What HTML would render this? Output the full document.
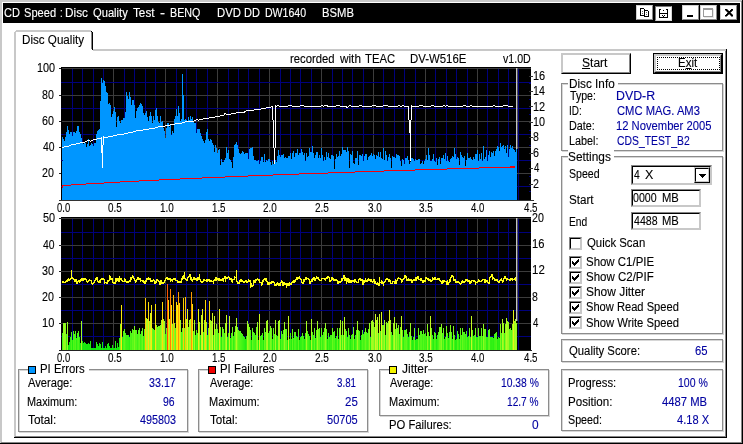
<!DOCTYPE html>
<html lang="en"><head><meta charset="utf-8"><title>CD Speed : Disc Quality Test</title>
<style>
html,body{margin:0;padding:0}
body{width:743px;height:444px;overflow:hidden;background:#fff;position:relative;font-family:"Liberation Sans",sans-serif;font-size:12px;line-height:14px;color:#000}
.a,.t{position:absolute}
.t{white-space:pre;transform-origin:0 0;line-height:14px;height:14px;-webkit-text-stroke:0.12px currentColor}
.t u{text-decoration:underline;text-underline-offset:1px}
.grp{position:absolute;border:1px solid #8c8c8c;box-sizing:border-box}
.grp2{position:absolute;border:1px solid #d6d6d6;box-sizing:border-box}
.mask{position:absolute;background:#fff}
.btn{position:absolute;box-sizing:border-box;background:#fff;border:1px solid;border-color:#c8c8c8 #000 #000 #c8c8c8}
.btn i{position:absolute;left:0;top:0;right:0;bottom:0;border:1px solid;border-color:#c8c8c8 #858585 #858585 #c8c8c8}
.cb{position:absolute;width:13px;height:13px;box-sizing:border-box;background:#fff;border:1px solid;border-color:#858585 #c8c8c8 #c8c8c8 #858585}
.cb i{position:absolute;left:0;top:0;right:0;bottom:0;border:1px solid;border-color:#000 #c8c8c8 #c8c8c8 #000}
.ed{position:absolute;box-sizing:border-box;background:#fff;border:1px solid;border-color:#858585 #c8c8c8 #c8c8c8 #858585}
.ed i{position:absolute;left:0;top:0;right:0;bottom:0;border:1px solid;border-color:#000 #c8c8c8 #c8c8c8 #000}
.sq{position:absolute;width:8px;height:8px;box-sizing:border-box;border:1px solid #000}
.tb{position:absolute;box-sizing:border-box;background:#fff;border:1px solid;border-color:#d0d0d0 #8a8a8a #8a8a8a #d0d0d0}
</style></head><body>
<div class="a" style="left:0px;top:0px;width:742px;height:2px;background:#c8c8c8;"></div>
<div class="a" style="left:0px;top:0px;width:2px;height:443px;background:#c8c8c8;"></div>
<div class="a" style="left:741px;top:1px;width:1px;height:442px;background:#868686;"></div>
<div class="a" style="left:1px;top:442px;width:741px;height:1px;background:#868686;"></div>
<div class="a" style="left:742px;top:0px;width:1px;height:444px;background:#000;"></div>
<div class="a" style="left:0px;top:443px;width:743px;height:1px;background:#000;"></div>
<div class="a" id="titlebar" style="left:3px;top:3px;width:737px;height:20px;background:#000"></div>
<div class="tb" style="left:636px;top:5px;width:17px;height:15px"><svg class="a" style="left:3px;top:2px" width="10" height="10" viewBox="0 0 10 10" shape-rendering="crispEdges"><path d="M0.5,0.5h3l1,1v6h-4z M4.5,2.5h3l1,1v5h-4z" fill="#fff" stroke="#000"/><rect x="2" y="3" width="1" height="1" fill="#666"/><rect x="2" y="5" width="1" height="1" fill="#666"/><rect x="6" y="4" width="1" height="1" fill="#666"/><rect x="6" y="6" width="1" height="1" fill="#666"/></svg></div>
<div class="a" style="left:655px;top:6px;width:17px;height:15px;background:#fff;box-sizing:border-box;border:1px solid;border-color:#7a7a7a #d6d6d6 #d6d6d6 #7a7a7a"><svg class="a" style="left:3px;top:2px" width="10" height="10" viewBox="0 0 10 10" shape-rendering="crispEdges"><path d="M0,0h1v9h-1z M8,0h1v9h-1z M0,4h9v1h-9z M0,8h9v1h-9z M0,0h2v1h-2z M7,0h2v1h-2z M4,1h1v1h-1z M3,6h1v1h-1z M5,6h1v1h-1z M4,7h1v1h-1z" fill="#000"/></svg></div>
<div class="tb" style="left:682px;top:5px;width:17px;height:15px"><div class="a" style="left:4px;top:9px;width:6px;height:2px;background:#000"></div></div>
<div class="tb" style="left:700px;top:5px;width:17px;height:15px"><div class="a" style="left:2px;top:2px;width:10px;height:9px;box-sizing:border-box;border:1px solid #9a9a9a;border-top-width:2px;box-shadow:1px 1px 0 #e8e8e8"></div></div>
<div class="tb" style="left:720px;top:5px;width:17px;height:15px"><svg class="a" style="left:4px;top:3px" width="8" height="8" viewBox="0 0 8 8" shape-rendering="crispEdges"><path d="M0,0h2v1h1v1h2v-1h1v-1h2v1h-1v1h-1v1h-1v1h1v1h1v1h1v1h-2v-1h-1v-1h-2v1h-1v1h-2v-1h1v-1h1v-1h1v-1h-1v-1h-1v-1h-1z" fill="#000" stroke="#000" stroke-width="0.5"/></svg></div>
<div class="a" style="left:14px;top:32px;width:2px;height:405px;background:#c8c8c8;"></div>
<div class="a" style="left:16px;top:30px;width:75px;height:2px;background:#c8c8c8;"></div>
<div class="a" style="left:15px;top:31px;width:1px;height:1px;background:#c8c8c8;"></div>
<div class="a" style="left:91px;top:31px;width:1px;height:1px;background:#000;"></div>
<div class="a" style="left:92px;top:32px;width:1px;height:18px;background:#000;"></div>
<div class="a" style="left:91px;top:32px;width:1px;height:17px;background:#858585;"></div>
<div class="a" style="left:93px;top:49px;width:633px;height:2px;background:#c8c8c8;"></div>
<div class="a" style="left:725px;top:51px;width:1px;height:386px;background:#858585;"></div>
<div class="a" style="left:726px;top:49px;width:1px;height:389px;background:#000;"></div>
<div class="a" style="left:15px;top:436px;width:711px;height:1px;background:#858585;"></div>
<div class="a" style="left:14px;top:437px;width:713px;height:1px;background:#000;"></div>
<div class="btn" style="left:561px;top:53px;width:70px;height:21px"><i></i></div>
<div class="a" style="left:653px;top:53px;width:70px;height:21px;background:#000"></div>
<div class="btn" style="left:654px;top:54px;width:68px;height:19px"><i></i></div>
<div class="a" style="left:657px;top:57px;width:63px;height:13px;box-sizing:border-box;border:1px dotted #000"></div>
<div class="grp2" style="left:562px;top:84px;width:162px;height:68px"></div>
<div class="grp" style="left:561px;top:83px;width:162px;height:68px"></div>
<div class="mask" style="left:568px;top:76px;width:50px;height:14px"></div>
<div class="grp2" style="left:562px;top:157px;width:162px;height:178px"></div>
<div class="grp" style="left:561px;top:156px;width:162px;height:178px"></div>
<div class="mask" style="left:568px;top:149px;width:46px;height:14px"></div>
<div class="grp2" style="left:562px;top:340px;width:162px;height:23px"></div>
<div class="grp" style="left:561px;top:339px;width:162px;height:23px"></div>
<div class="grp2" style="left:562px;top:370px;width:162px;height:62px"></div>
<div class="grp" style="left:561px;top:369px;width:162px;height:62px"></div>
<div class="grp2" style="left:19px;top:370px;width:170px;height:63px"></div>
<div class="grp" style="left:18px;top:369px;width:170px;height:63px"></div>
<div class="mask" style="left:36px;top:362px;width:53px;height:14px"></div>
<div class="grp2" style="left:199px;top:370px;width:170px;height:63px"></div>
<div class="grp" style="left:198px;top:369px;width:170px;height:63px"></div>
<div class="mask" style="left:216px;top:362px;width:63px;height:14px"></div>
<div class="grp2" style="left:380px;top:370px;width:170px;height:47px"></div>
<div class="grp" style="left:379px;top:369px;width:170px;height:47px"></div>
<div class="mask" style="left:397px;top:362px;width:31px;height:14px"></div>
<div class="sq" style="left:28px;top:366px;background:#0096ff"></div>
<div class="sq" style="left:208px;top:366px;background:#f00000"></div>
<div class="sq" style="left:389px;top:366px;background:#f4f400"></div>
<div class="ed" style="left:631px;top:165px;width:81px;height:20px"><i></i><div class="btn" style="left:62px;top:1px;width:16px;height:16px"><i></i><svg class="a" style="left:4px;top:6px" width="7" height="4" viewBox="0 0 7 4" shape-rendering="crispEdges"><path d="M0,0h7v1h-1v1h-1v1h-1v1h-1v-1h-1v-1h-1v-1h-1z" fill="#000"/></svg></div></div>
<div class="ed" style="left:631px;top:189px;width:70px;height:18px"><i></i></div>
<div class="ed" style="left:631px;top:212px;width:70px;height:18px"><i></i></div>
<div class="cb" style="left:569px;top:237px"><i></i></div>
<div class="cb" style="left:569px;top:256px"><i></i><svg class="a" style="left:2px;top:2px" width="7" height="7" viewBox="0 0 7 7" shape-rendering="crispEdges"><path d="M0,2h1v1h1v1h1v-1h1v-1h1v-1h1v-1h1v3h-1v1h-1v1h-1v1h-1v1h-1v-1h-1v-1h-1z" fill="#000"/></svg></div>
<div class="cb" style="left:569px;top:271px"><i></i><svg class="a" style="left:2px;top:2px" width="7" height="7" viewBox="0 0 7 7" shape-rendering="crispEdges"><path d="M0,2h1v1h1v1h1v-1h1v-1h1v-1h1v-1h1v3h-1v1h-1v1h-1v1h-1v1h-1v-1h-1v-1h-1z" fill="#000"/></svg></div>
<div class="cb" style="left:569px;top:286px"><i></i><svg class="a" style="left:2px;top:2px" width="7" height="7" viewBox="0 0 7 7" shape-rendering="crispEdges"><path d="M0,2h1v1h1v1h1v-1h1v-1h1v-1h1v-1h1v3h-1v1h-1v1h-1v1h-1v1h-1v-1h-1v-1h-1z" fill="#000"/></svg></div>
<div class="cb" style="left:569px;top:301px"><i></i><svg class="a" style="left:2px;top:2px" width="7" height="7" viewBox="0 0 7 7" shape-rendering="crispEdges"><path d="M0,2h1v1h1v1h1v-1h1v-1h1v-1h1v-1h1v3h-1v1h-1v1h-1v1h-1v1h-1v-1h-1v-1h-1z" fill="#000"/></svg></div>
<div class="cb" style="left:569px;top:316px"><i></i><svg class="a" style="left:2px;top:2px" width="7" height="7" viewBox="0 0 7 7" shape-rendering="crispEdges"><path d="M0,2h1v1h1v1h1v-1h1v-1h1v-1h1v-1h1v3h-1v1h-1v1h-1v1h-1v1h-1v-1h-1v-1h-1z" fill="#000"/></svg></div>
<svg class="charts" width="743" height="444" viewBox="0 0 743 444" style="position:absolute;left:0;top:0">
<g shape-rendering="crispEdges">
<rect x="61" y="67" width="470" height="134" fill="#000"/>
<rect x="72" y="69" width="1" height="132" fill="#00007c"/>
<rect x="82" y="69" width="1" height="132" fill="#00007c"/>
<rect x="93" y="69" width="1" height="132" fill="#00007c"/>
<rect x="103" y="69" width="1" height="132" fill="#00007c"/>
<rect x="113" y="69" width="1" height="132" fill="#3c3c3c"/>
<rect x="124" y="69" width="1" height="132" fill="#00007c"/>
<rect x="134" y="69" width="1" height="132" fill="#00007c"/>
<rect x="145" y="69" width="1" height="132" fill="#00007c"/>
<rect x="155" y="69" width="1" height="132" fill="#00007c"/>
<rect x="165" y="69" width="1" height="132" fill="#3c3c3c"/>
<rect x="176" y="69" width="1" height="132" fill="#00007c"/>
<rect x="186" y="69" width="1" height="132" fill="#00007c"/>
<rect x="196" y="69" width="1" height="132" fill="#00007c"/>
<rect x="207" y="69" width="1" height="132" fill="#00007c"/>
<rect x="217" y="69" width="1" height="132" fill="#3c3c3c"/>
<rect x="228" y="69" width="1" height="132" fill="#00007c"/>
<rect x="238" y="69" width="1" height="132" fill="#00007c"/>
<rect x="248" y="69" width="1" height="132" fill="#00007c"/>
<rect x="259" y="69" width="1" height="132" fill="#00007c"/>
<rect x="269" y="69" width="1" height="132" fill="#3c3c3c"/>
<rect x="280" y="69" width="1" height="132" fill="#00007c"/>
<rect x="290" y="69" width="1" height="132" fill="#00007c"/>
<rect x="300" y="69" width="1" height="132" fill="#00007c"/>
<rect x="311" y="69" width="1" height="132" fill="#00007c"/>
<rect x="321" y="69" width="1" height="132" fill="#3c3c3c"/>
<rect x="332" y="69" width="1" height="132" fill="#00007c"/>
<rect x="342" y="69" width="1" height="132" fill="#00007c"/>
<rect x="352" y="69" width="1" height="132" fill="#00007c"/>
<rect x="363" y="69" width="1" height="132" fill="#00007c"/>
<rect x="373" y="69" width="1" height="132" fill="#3c3c3c"/>
<rect x="383" y="69" width="1" height="132" fill="#00007c"/>
<rect x="394" y="69" width="1" height="132" fill="#00007c"/>
<rect x="404" y="69" width="1" height="132" fill="#00007c"/>
<rect x="415" y="69" width="1" height="132" fill="#00007c"/>
<rect x="425" y="69" width="1" height="132" fill="#3c3c3c"/>
<rect x="435" y="69" width="1" height="132" fill="#00007c"/>
<rect x="446" y="69" width="1" height="132" fill="#00007c"/>
<rect x="456" y="69" width="1" height="132" fill="#00007c"/>
<rect x="467" y="69" width="1" height="132" fill="#00007c"/>
<rect x="477" y="69" width="1" height="132" fill="#3c3c3c"/>
<rect x="487" y="69" width="1" height="132" fill="#00007c"/>
<rect x="498" y="69" width="1" height="132" fill="#00007c"/>
<rect x="508" y="69" width="1" height="132" fill="#00007c"/>
<rect x="518" y="69" width="1" height="132" fill="#00007c"/>
<rect x="61" y="82" width="470" height="1" fill="#00007c"/>
<rect x="61" y="108" width="470" height="1" fill="#00007c"/>
<rect x="61" y="134" width="470" height="1" fill="#00007c"/>
<rect x="61" y="160" width="470" height="1" fill="#00007c"/>
<rect x="61" y="186" width="470" height="1" fill="#00007c"/>
<rect x="61" y="68" width="470" height="1" fill="#3c3c3c"/>
<rect x="61" y="95" width="470" height="1" fill="#3c3c3c"/>
<rect x="61" y="121" width="470" height="1" fill="#3c3c3c"/>
<rect x="61" y="147" width="470" height="1" fill="#3c3c3c"/>
<rect x="61" y="173" width="470" height="1" fill="#3c3c3c"/>
</g>
<path d="M62,200 L62,137 L63,137 L63,139 L64,139 L64,141 L65,141 L65,137 L66,137 L66,132 L67,132 L67,126 L68,126 L68,130 L69,130 L69,134 L70,134 L70,132 L71,132 L71,132 L72,132 L72,136 L73,136 L73,132 L74,132 L74,132 L75,132 L75,133 L76,133 L76,131 L77,131 L77,126 L78,126 L78,126 L79,126 L79,132 L80,132 L80,134 L81,134 L81,138 L82,138 L82,142 L83,142 L83,144 L84,144 L84,142 L85,142 L85,143 L86,143 L86,147 L87,147 L87,144 L88,144 L88,139 L89,139 L89,146 L90,146 L90,145 L91,145 L91,143 L92,143 L92,144 L93,144 L93,146 L94,146 L94,143 L95,143 L95,143 L96,143 L96,134 L97,134 L97,131 L98,131 L98,130 L99,130 L99,129 L100,129 L100,101 L101,101 L101,78 L102,78 L102,83 L103,83 L103,80 L104,80 L104,81 L105,81 L105,86 L106,86 L106,92 L107,92 L107,93 L108,93 L108,104 L109,104 L109,103 L110,103 L110,105 L111,105 L111,117 L112,117 L112,114 L113,114 L113,111 L114,111 L114,107 L115,107 L115,112 L116,112 L116,127 L117,127 L117,117 L118,117 L118,116 L119,116 L119,121 L120,121 L120,123 L121,123 L121,120 L122,120 L122,120 L123,120 L123,118 L124,118 L124,118 L125,118 L125,112 L126,112 L126,92 L127,92 L127,96 L128,96 L128,99 L129,99 L129,92 L130,92 L130,97 L131,97 L131,105 L132,105 L132,100 L133,100 L133,100 L134,100 L134,105 L135,105 L135,118 L136,118 L136,111 L137,111 L137,108 L138,108 L138,107 L139,107 L139,105 L140,105 L140,103 L141,103 L141,104 L142,104 L142,106 L143,106 L143,113 L144,113 L144,115 L145,115 L145,113 L146,113 L146,111 L147,111 L147,117 L148,117 L148,121 L149,121 L149,116 L150,116 L150,112 L151,112 L151,116 L152,116 L152,123 L153,123 L153,116 L154,116 L154,120 L155,120 L155,110 L156,110 L156,108 L157,108 L157,116 L158,116 L158,122 L159,122 L159,123 L160,123 L160,116 L161,116 L161,122 L162,122 L162,121 L163,121 L163,128 L164,128 L164,131 L165,131 L165,138 L166,138 L166,128 L167,128 L167,123 L168,123 L168,123 L169,123 L169,127 L170,127 L170,125 L171,125 L171,135 L172,135 L172,131 L173,131 L173,133 L174,133 L174,119 L175,119 L175,116 L176,116 L176,109 L177,109 L177,116 L178,116 L178,106 L179,106 L179,113 L180,113 L180,121 L181,121 L181,119 L182,119 L182,74 L183,74 L183,95 L184,95 L184,120 L185,120 L185,119 L186,119 L186,120 L187,120 L187,122 L188,122 L188,117 L189,117 L189,120 L190,120 L190,116 L191,116 L191,119 L192,119 L192,117 L193,117 L193,121 L194,121 L194,123 L195,123 L195,123 L196,123 L196,133 L197,133 L197,129 L198,129 L198,129 L199,129 L199,129 L200,129 L200,133 L201,133 L201,136 L202,136 L202,139 L203,139 L203,141 L204,141 L204,143 L205,143 L205,140 L206,140 L206,132 L207,132 L207,129 L208,129 L208,139 L209,139 L209,141 L210,141 L210,139 L211,139 L211,140 L212,140 L212,143 L213,143 L213,145 L214,145 L214,152 L215,152 L215,145 L216,145 L216,148 L217,148 L217,153 L218,153 L218,150 L219,150 L219,149 L220,149 L220,165 L221,165 L221,159 L222,159 L222,162 L223,162 L223,162 L224,162 L224,160 L225,160 L225,158 L226,158 L226,147 L227,147 L227,153 L228,153 L228,150 L229,150 L229,159 L230,159 L230,160 L231,160 L231,162 L232,162 L232,168 L233,168 L233,157 L234,157 L234,145 L235,145 L235,144 L236,144 L236,142 L237,142 L237,145 L238,145 L238,149 L239,149 L239,153 L240,153 L240,154 L241,154 L241,153 L242,153 L242,151 L243,151 L243,152 L244,152 L244,154 L245,154 L245,153 L246,153 L246,153 L247,153 L247,153 L248,153 L248,159 L249,159 L249,149 L250,149 L250,148 L251,148 L251,148 L252,148 L252,147 L253,147 L253,156 L254,156 L254,160 L255,160 L255,160 L256,160 L256,161 L257,161 L257,161 L258,161 L258,160 L259,160 L259,164 L260,164 L260,161 L261,161 L261,157 L262,157 L262,157 L263,157 L263,162 L264,162 L264,154 L265,154 L265,162 L266,162 L266,160 L267,160 L267,161 L268,161 L268,159 L269,159 L269,159 L270,159 L270,162 L271,162 L271,165 L272,165 L272,161 L273,161 L273,164 L274,164 L274,162 L275,162 L275,160 L276,160 L276,162 L277,162 L277,156 L278,156 L278,150 L279,150 L279,155 L280,155 L280,157 L281,157 L281,155 L282,155 L282,155 L283,155 L283,154 L284,154 L284,158 L285,158 L285,157 L286,157 L286,158 L287,158 L287,158 L288,158 L288,156 L289,156 L289,156 L290,156 L290,153 L291,153 L291,159 L292,159 L292,153 L293,153 L293,151 L294,151 L294,157 L295,157 L295,153 L296,153 L296,153 L297,153 L297,149 L298,149 L298,155 L299,155 L299,153 L300,153 L300,153 L301,153 L301,149 L302,149 L302,152 L303,152 L303,155 L304,155 L304,153 L305,153 L305,161 L306,161 L306,153 L307,153 L307,157 L308,157 L308,156 L309,156 L309,148 L310,148 L310,152 L311,152 L311,152 L312,152 L312,146 L313,146 L313,153 L314,153 L314,158 L315,158 L315,155 L316,155 L316,152 L317,152 L317,152 L318,152 L318,158 L319,158 L319,155 L320,155 L320,158 L321,158 L321,148 L322,148 L322,155 L323,155 L323,161 L324,161 L324,157 L325,157 L325,160 L326,160 L326,152 L327,152 L327,157 L328,157 L328,153 L329,153 L329,158 L330,158 L330,159 L331,159 L331,155 L332,155 L332,155 L333,155 L333,156 L334,156 L334,169 L335,169 L335,159 L336,159 L336,154 L337,154 L337,157 L338,157 L338,156 L339,156 L339,151 L340,151 L340,156 L341,156 L341,154 L342,154 L342,147 L343,147 L343,150 L344,150 L344,150 L345,150 L345,150 L346,150 L346,152 L347,152 L347,147 L348,147 L348,151 L349,151 L349,168 L350,168 L350,154 L351,154 L351,155 L352,155 L352,151 L353,151 L353,163 L354,163 L354,164 L355,164 L355,158 L356,158 L356,158 L357,158 L357,151 L358,151 L358,165 L359,165 L359,155 L360,155 L360,155 L361,155 L361,156 L362,156 L362,154 L363,154 L363,161 L364,161 L364,156 L365,156 L365,154 L366,154 L366,154 L367,154 L367,160 L368,160 L368,157 L369,157 L369,156 L370,156 L370,155 L371,155 L371,153 L372,153 L372,156 L373,156 L373,154 L374,154 L374,155 L375,155 L375,159 L376,159 L376,155 L377,155 L377,156 L378,156 L378,152 L379,152 L379,157 L380,157 L380,152 L381,152 L381,158 L382,158 L382,159 L383,159 L383,148 L384,148 L384,160 L385,160 L385,151 L386,151 L386,155 L387,155 L387,161 L388,161 L388,157 L389,157 L389,154 L390,154 L390,158 L391,158 L391,168 L392,168 L392,156 L393,156 L393,157 L394,157 L394,157 L395,157 L395,158 L396,158 L396,154 L397,154 L397,155 L398,155 L398,155 L399,155 L399,156 L400,156 L400,161 L401,161 L401,166 L402,166 L402,159 L403,159 L403,160 L404,160 L404,164 L405,164 L405,158 L406,158 L406,158 L407,158 L407,156 L408,156 L408,160 L409,160 L409,164 L410,164 L410,162 L411,162 L411,158 L412,158 L412,158 L413,158 L413,159 L414,159 L414,161 L415,161 L415,159 L416,159 L416,160 L417,160 L417,160 L418,160 L418,159 L419,159 L419,159 L420,159 L420,164 L421,164 L421,163 L422,163 L422,161 L423,161 L423,164 L424,164 L424,161 L425,161 L425,159 L426,159 L426,155 L427,155 L427,160 L428,160 L428,148 L429,148 L429,155 L430,155 L430,161 L431,161 L431,161 L432,161 L432,159 L433,159 L433,154 L434,154 L434,161 L435,161 L435,162 L436,162 L436,158 L437,158 L437,165 L438,165 L438,159 L439,159 L439,157 L440,157 L440,164 L441,164 L441,158 L442,158 L442,158 L443,158 L443,155 L444,155 L444,159 L445,159 L445,153 L446,153 L446,161 L447,161 L447,156 L448,156 L448,161 L449,161 L449,162 L450,162 L450,159 L451,159 L451,158 L452,158 L452,156 L453,156 L453,157 L454,157 L454,148 L455,148 L455,154 L456,154 L456,159 L457,159 L457,157 L458,157 L458,158 L459,158 L459,165 L460,165 L460,152 L461,152 L461,155 L462,155 L462,157 L463,157 L463,158 L464,158 L464,156 L465,156 L465,166 L466,166 L466,160 L467,160 L467,153 L468,153 L468,158 L469,158 L469,158 L470,158 L470,157 L471,157 L471,159 L472,159 L472,160 L473,160 L473,157 L474,157 L474,159 L475,159 L475,154 L476,154 L476,154 L477,154 L477,150 L478,150 L478,161 L479,161 L479,154 L480,154 L480,159 L481,159 L481,153 L482,153 L482,161 L483,161 L483,146 L484,146 L484,159 L485,159 L485,157 L486,157 L486,150 L487,150 L487,161 L488,161 L488,155 L489,155 L489,151 L490,151 L490,157 L491,157 L491,152 L492,152 L492,153 L493,153 L493,151 L494,151 L494,156 L495,156 L495,151 L496,151 L496,149 L497,149 L497,146 L498,146 L498,147 L499,147 L499,151 L500,151 L500,143 L501,143 L501,147 L502,147 L502,146 L503,146 L503,145 L504,145 L504,149 L505,149 L505,146 L506,146 L506,153 L507,153 L507,145 L508,145 L508,157 L509,157 L509,149 L510,149 L510,145 L511,145 L511,148 L512,148 L512,146 L513,146 L513,149 L514,149 L514,150 L515,150 L515,152 L516,152 L516,147 L517,147 L517,200 Z" fill="#0096ff" shape-rendering="crispEdges"/>
<g shape-rendering="crispEdges" fill="#00007c">
<rect x="61" y="67" width="1" height="134" fill="#000"/>
<rect x="61" y="186" width="2" height="1"/>
<rect x="61" y="160" width="2" height="1"/>
<rect x="61" y="134" width="2" height="1"/>
<rect x="61" y="108" width="2" height="1"/>
<rect x="61" y="82" width="2" height="1"/>
</g>
<g fill="#f4000c" shape-rendering="crispEdges"><rect x="62" y="185" width="9" height="1"/><rect x="71" y="184" width="15" height="1"/><rect x="86" y="183" width="18" height="1"/><rect x="104" y="182" width="16" height="1"/><rect x="120" y="181" width="19" height="1"/><rect x="139" y="180" width="20" height="1"/><rect x="159" y="179" width="21" height="1"/><rect x="180" y="178" width="22" height="1"/><rect x="202" y="177" width="23" height="1"/><rect x="225" y="176" width="23" height="1"/><rect x="248" y="175" width="25" height="1"/><rect x="273" y="174" width="26" height="1"/><rect x="299" y="173" width="29" height="1"/><rect x="328" y="172" width="27" height="1"/><rect x="355" y="171" width="29" height="1"/><rect x="384" y="170" width="31" height="1"/><rect x="415" y="169" width="32" height="1"/><rect x="447" y="168" width="32" height="1"/><rect x="479" y="167" width="36" height="1"/><rect x="62" y="186" width="1" height="2"/><rect x="510" y="166" width="5" height="1"/></g>
<g fill="#fff" shape-rendering="crispEdges"><rect x="62" y="147" width="1" height="1"/><rect x="63" y="147" width="1" height="1"/><rect x="64" y="146" width="1" height="1"/><rect x="65" y="146" width="1" height="1"/><rect x="66" y="146" width="1" height="1"/><rect x="67" y="146" width="1" height="1"/><rect x="68" y="146" width="1" height="1"/><rect x="69" y="145" width="1" height="1"/><rect x="70" y="145" width="1" height="1"/><rect x="71" y="144" width="1" height="1"/><rect x="72" y="144" width="1" height="1"/><rect x="73" y="144" width="1" height="1"/><rect x="74" y="144" width="1" height="1"/><rect x="75" y="144" width="1" height="1"/><rect x="76" y="143" width="1" height="1"/><rect x="77" y="143" width="1" height="1"/><rect x="78" y="143" width="1" height="1"/><rect x="79" y="143" width="1" height="1"/><rect x="80" y="142" width="1" height="1"/><rect x="81" y="142" width="1" height="1"/><rect x="82" y="142" width="1" height="1"/><rect x="83" y="142" width="1" height="1"/><rect x="84" y="142" width="1" height="1"/><rect x="85" y="141" width="1" height="1"/><rect x="86" y="141" width="1" height="1"/><rect x="87" y="140" width="1" height="1"/><rect x="88" y="140" width="1" height="1"/><rect x="89" y="140" width="1" height="1"/><rect x="90" y="141" width="1" height="1"/><rect x="91" y="140" width="1" height="1"/><rect x="92" y="140" width="1" height="1"/><rect x="93" y="139" width="1" height="1"/><rect x="94" y="139" width="1" height="1"/><rect x="95" y="139" width="1" height="1"/><rect x="96" y="139" width="1" height="1"/><rect x="97" y="138" width="1" height="1"/><rect x="98" y="138" width="1" height="1"/><rect x="99" y="138" width="1" height="1"/><rect x="100" y="138" width="1" height="1"/><rect x="101" y="138" width="1" height="1"/><rect x="103" y="138" width="1" height="1"/><rect x="104" y="137" width="1" height="1"/><rect x="105" y="137" width="1" height="1"/><rect x="106" y="137" width="1" height="1"/><rect x="107" y="137" width="1" height="1"/><rect x="108" y="136" width="1" height="1"/><rect x="109" y="136" width="1" height="1"/><rect x="110" y="136" width="1" height="1"/><rect x="111" y="136" width="1" height="1"/><rect x="112" y="136" width="1" height="1"/><rect x="113" y="135" width="1" height="1"/><rect x="114" y="135" width="1" height="1"/><rect x="115" y="135" width="1" height="1"/><rect x="116" y="135" width="1" height="1"/><rect x="117" y="134" width="1" height="1"/><rect x="118" y="134" width="1" height="1"/><rect x="119" y="134" width="1" height="1"/><rect x="120" y="134" width="1" height="1"/><rect x="121" y="134" width="1" height="1"/><rect x="122" y="134" width="1" height="1"/><rect x="123" y="134" width="1" height="1"/><rect x="124" y="133" width="1" height="1"/><rect x="125" y="133" width="1" height="1"/><rect x="126" y="133" width="1" height="1"/><rect x="127" y="133" width="1" height="1"/><rect x="128" y="132" width="1" height="1"/><rect x="129" y="132" width="1" height="1"/><rect x="130" y="132" width="1" height="1"/><rect x="131" y="132" width="1" height="1"/><rect x="132" y="132" width="1" height="1"/><rect x="133" y="131" width="1" height="1"/><rect x="134" y="131" width="1" height="1"/><rect x="135" y="131" width="1" height="1"/><rect x="136" y="130" width="1" height="1"/><rect x="137" y="130" width="1" height="1"/><rect x="138" y="130" width="1" height="1"/><rect x="139" y="130" width="1" height="1"/><rect x="140" y="130" width="1" height="1"/><rect x="141" y="130" width="1" height="1"/><rect x="142" y="130" width="1" height="1"/><rect x="143" y="129" width="1" height="1"/><rect x="144" y="129" width="1" height="1"/><rect x="145" y="129" width="1" height="1"/><rect x="146" y="129" width="1" height="1"/><rect x="147" y="129" width="1" height="1"/><rect x="148" y="129" width="1" height="1"/><rect x="149" y="128" width="1" height="1"/><rect x="150" y="128" width="1" height="1"/><rect x="151" y="128" width="1" height="1"/><rect x="152" y="128" width="1" height="1"/><rect x="153" y="128" width="1" height="1"/><rect x="154" y="128" width="1" height="1"/><rect x="155" y="127" width="1" height="1"/><rect x="156" y="127" width="1" height="1"/><rect x="157" y="127" width="1" height="1"/><rect x="158" y="126" width="1" height="1"/><rect x="159" y="126" width="1" height="1"/><rect x="160" y="126" width="1" height="1"/><rect x="161" y="126" width="1" height="1"/><rect x="162" y="126" width="1" height="1"/><rect x="163" y="126" width="1" height="1"/><rect x="164" y="126" width="1" height="1"/><rect x="165" y="125" width="1" height="1"/><rect x="166" y="125" width="1" height="1"/><rect x="167" y="125" width="1" height="1"/><rect x="168" y="125" width="1" height="1"/><rect x="169" y="125" width="1" height="1"/><rect x="170" y="124" width="1" height="1"/><rect x="171" y="124" width="1" height="1"/><rect x="172" y="124" width="1" height="1"/><rect x="173" y="124" width="1" height="1"/><rect x="174" y="124" width="1" height="1"/><rect x="175" y="123" width="1" height="1"/><rect x="176" y="123" width="1" height="1"/><rect x="177" y="123" width="1" height="1"/><rect x="178" y="123" width="1" height="1"/><rect x="179" y="123" width="1" height="1"/><rect x="180" y="123" width="1" height="1"/><rect x="181" y="123" width="1" height="1"/><rect x="182" y="122" width="1" height="1"/><rect x="183" y="122" width="1" height="1"/><rect x="184" y="122" width="1" height="1"/><rect x="185" y="121" width="1" height="1"/><rect x="186" y="121" width="1" height="1"/><rect x="187" y="121" width="1" height="1"/><rect x="188" y="121" width="1" height="1"/><rect x="189" y="121" width="1" height="1"/><rect x="190" y="121" width="1" height="1"/><rect x="191" y="121" width="1" height="1"/><rect x="192" y="121" width="1" height="1"/><rect x="193" y="121" width="1" height="1"/><rect x="194" y="120" width="1" height="1"/><rect x="195" y="120" width="1" height="1"/><rect x="196" y="119" width="1" height="1"/><rect x="197" y="119" width="1" height="1"/><rect x="198" y="120" width="1" height="1"/><rect x="199" y="119" width="1" height="1"/><rect x="200" y="119" width="1" height="1"/><rect x="201" y="119" width="1" height="1"/><rect x="202" y="119" width="1" height="1"/><rect x="203" y="118" width="1" height="1"/><rect x="204" y="118" width="1" height="1"/><rect x="205" y="118" width="1" height="1"/><rect x="206" y="118" width="1" height="1"/><rect x="207" y="118" width="1" height="1"/><rect x="208" y="118" width="1" height="1"/><rect x="209" y="117" width="1" height="1"/><rect x="210" y="117" width="1" height="1"/><rect x="211" y="117" width="1" height="1"/><rect x="212" y="117" width="1" height="1"/><rect x="213" y="117" width="1" height="1"/><rect x="214" y="117" width="1" height="1"/><rect x="215" y="116" width="1" height="1"/><rect x="216" y="116" width="1" height="1"/><rect x="217" y="116" width="1" height="1"/><rect x="218" y="116" width="1" height="1"/><rect x="219" y="116" width="1" height="1"/><rect x="220" y="115" width="1" height="1"/><rect x="221" y="115" width="1" height="1"/><rect x="222" y="115" width="1" height="1"/><rect x="223" y="115" width="1" height="1"/><rect x="224" y="113" width="1" height="2"/><rect x="225" y="113" width="1" height="1"/><rect x="226" y="114" width="1" height="1"/><rect x="227" y="114" width="1" height="1"/><rect x="228" y="114" width="1" height="1"/><rect x="229" y="114" width="1" height="1"/><rect x="230" y="114" width="1" height="1"/><rect x="231" y="113" width="1" height="1"/><rect x="232" y="113" width="1" height="1"/><rect x="233" y="113" width="1" height="1"/><rect x="234" y="113" width="1" height="1"/><rect x="235" y="113" width="1" height="1"/><rect x="236" y="112" width="1" height="1"/><rect x="237" y="112" width="1" height="1"/><rect x="238" y="112" width="1" height="1"/><rect x="239" y="112" width="1" height="1"/><rect x="240" y="112" width="1" height="1"/><rect x="241" y="112" width="1" height="1"/><rect x="242" y="112" width="1" height="1"/><rect x="243" y="112" width="1" height="1"/><rect x="244" y="111" width="1" height="2"/><rect x="245" y="111" width="1" height="1"/><rect x="246" y="110" width="1" height="1"/><rect x="247" y="110" width="1" height="1"/><rect x="248" y="110" width="1" height="1"/><rect x="249" y="110" width="1" height="1"/><rect x="250" y="110" width="1" height="1"/><rect x="251" y="110" width="1" height="1"/><rect x="252" y="110" width="1" height="1"/><rect x="253" y="110" width="1" height="1"/><rect x="254" y="109" width="1" height="1"/><rect x="255" y="109" width="1" height="1"/><rect x="256" y="109" width="1" height="1"/><rect x="257" y="109" width="1" height="1"/><rect x="258" y="109" width="1" height="1"/><rect x="259" y="109" width="1" height="1"/><rect x="260" y="109" width="1" height="1"/><rect x="261" y="108" width="1" height="1"/><rect x="262" y="108" width="1" height="1"/><rect x="263" y="108" width="1" height="1"/><rect x="264" y="108" width="1" height="1"/><rect x="265" y="108" width="1" height="1"/><rect x="266" y="107" width="1" height="1"/><rect x="267" y="107" width="1" height="1"/><rect x="268" y="107" width="1" height="1"/><rect x="269" y="107" width="1" height="1"/><rect x="270" y="107" width="1" height="1"/><rect x="271" y="106" width="1" height="1"/><rect x="272" y="106" width="1" height="1"/><rect x="275" y="106" width="1" height="1"/><rect x="276" y="106" width="1" height="1"/><rect x="277" y="105" width="1" height="1"/><rect x="278" y="105" width="1" height="1"/><rect x="279" y="106" width="1" height="1"/><rect x="280" y="106" width="1" height="1"/><rect x="281" y="106" width="1" height="1"/><rect x="282" y="106" width="1" height="1"/><rect x="283" y="106" width="1" height="1"/><rect x="284" y="106" width="1" height="1"/><rect x="285" y="106" width="1" height="1"/><rect x="286" y="106" width="1" height="1"/><rect x="287" y="106" width="1" height="1"/><rect x="288" y="105" width="1" height="1"/><rect x="289" y="105" width="1" height="1"/><rect x="290" y="105" width="1" height="1"/><rect x="291" y="105" width="1" height="1"/><rect x="292" y="106" width="1" height="1"/><rect x="293" y="106" width="1" height="1"/><rect x="294" y="106" width="1" height="1"/><rect x="295" y="106" width="1" height="1"/><rect x="296" y="106" width="1" height="1"/><rect x="297" y="106" width="1" height="1"/><rect x="298" y="106" width="1" height="1"/><rect x="299" y="106" width="1" height="1"/><rect x="300" y="105" width="1" height="1"/><rect x="301" y="105" width="1" height="1"/><rect x="302" y="105" width="1" height="1"/><rect x="303" y="105" width="1" height="1"/><rect x="304" y="106" width="1" height="1"/><rect x="305" y="106" width="1" height="1"/><rect x="306" y="106" width="1" height="1"/><rect x="307" y="106" width="1" height="1"/><rect x="308" y="106" width="1" height="1"/><rect x="309" y="106" width="1" height="1"/><rect x="310" y="106" width="1" height="1"/><rect x="311" y="106" width="1" height="1"/><rect x="312" y="106" width="1" height="1"/><rect x="313" y="106" width="1" height="1"/><rect x="314" y="106" width="1" height="1"/><rect x="315" y="106" width="1" height="1"/><rect x="316" y="106" width="1" height="1"/><rect x="317" y="106" width="1" height="1"/><rect x="318" y="106" width="1" height="1"/><rect x="319" y="106" width="1" height="1"/><rect x="320" y="106" width="1" height="1"/><rect x="321" y="105" width="1" height="1"/><rect x="322" y="105" width="1" height="1"/><rect x="323" y="106" width="1" height="1"/><rect x="324" y="105" width="1" height="1"/><rect x="325" y="105" width="1" height="1"/><rect x="326" y="105" width="1" height="1"/><rect x="327" y="105" width="1" height="2"/><rect x="328" y="106" width="1" height="1"/><rect x="329" y="106" width="1" height="1"/><rect x="330" y="106" width="1" height="1"/><rect x="331" y="106" width="1" height="1"/><rect x="332" y="106" width="1" height="1"/><rect x="333" y="106" width="1" height="1"/><rect x="334" y="106" width="1" height="1"/><rect x="335" y="106" width="1" height="1"/><rect x="336" y="105" width="1" height="1"/><rect x="337" y="105" width="1" height="1"/><rect x="338" y="105" width="1" height="1"/><rect x="339" y="105" width="1" height="1"/><rect x="340" y="106" width="1" height="1"/><rect x="341" y="106" width="1" height="1"/><rect x="342" y="106" width="1" height="1"/><rect x="343" y="106" width="1" height="1"/><rect x="344" y="106" width="1" height="1"/><rect x="345" y="106" width="1" height="1"/><rect x="346" y="106" width="1" height="2"/><rect x="347" y="107" width="1" height="1"/><rect x="348" y="106" width="1" height="1"/><rect x="349" y="105" width="1" height="1"/><rect x="350" y="105" width="1" height="1"/><rect x="351" y="106" width="1" height="1"/><rect x="352" y="106" width="1" height="1"/><rect x="353" y="106" width="1" height="1"/><rect x="354" y="106" width="1" height="1"/><rect x="355" y="106" width="1" height="1"/><rect x="356" y="106" width="1" height="1"/><rect x="357" y="106" width="1" height="1"/><rect x="358" y="106" width="1" height="1"/><rect x="359" y="105" width="1" height="1"/><rect x="360" y="105" width="1" height="1"/><rect x="361" y="105" width="1" height="1"/><rect x="362" y="106" width="1" height="1"/><rect x="363" y="106" width="1" height="1"/><rect x="364" y="106" width="1" height="1"/><rect x="365" y="106" width="1" height="1"/><rect x="366" y="106" width="1" height="1"/><rect x="367" y="106" width="1" height="1"/><rect x="368" y="106" width="1" height="1"/><rect x="369" y="106" width="1" height="1"/><rect x="370" y="106" width="1" height="1"/><rect x="371" y="106" width="1" height="1"/><rect x="372" y="105" width="1" height="1"/><rect x="373" y="105" width="1" height="1"/><rect x="374" y="105" width="1" height="1"/><rect x="375" y="105" width="1" height="1"/><rect x="376" y="106" width="1" height="1"/><rect x="377" y="106" width="1" height="1"/><rect x="378" y="106" width="1" height="1"/><rect x="379" y="106" width="1" height="1"/><rect x="380" y="106" width="1" height="1"/><rect x="381" y="106" width="1" height="1"/><rect x="382" y="106" width="1" height="1"/><rect x="383" y="105" width="1" height="1"/><rect x="384" y="105" width="1" height="1"/><rect x="385" y="105" width="1" height="1"/><rect x="386" y="105" width="1" height="1"/><rect x="387" y="105" width="1" height="1"/><rect x="388" y="106" width="1" height="1"/><rect x="389" y="106" width="1" height="1"/><rect x="390" y="106" width="1" height="1"/><rect x="391" y="106" width="1" height="1"/><rect x="392" y="106" width="1" height="1"/><rect x="393" y="106" width="1" height="1"/><rect x="394" y="106" width="1" height="1"/><rect x="395" y="106" width="1" height="1"/><rect x="396" y="106" width="1" height="1"/><rect x="397" y="106" width="1" height="1"/><rect x="398" y="105" width="1" height="1"/><rect x="399" y="105" width="1" height="1"/><rect x="400" y="106" width="1" height="1"/><rect x="401" y="106" width="1" height="1"/><rect x="402" y="105" width="1" height="1"/><rect x="403" y="105" width="1" height="1"/><rect x="404" y="106" width="1" height="1"/><rect x="405" y="106" width="1" height="1"/><rect x="406" y="106" width="1" height="1"/><rect x="407" y="106" width="1" height="1"/><rect x="408" y="106" width="1" height="1"/><rect x="411" y="105" width="1" height="1"/><rect x="412" y="106" width="1" height="1"/><rect x="413" y="106" width="1" height="1"/><rect x="414" y="106" width="1" height="1"/><rect x="415" y="106" width="1" height="1"/><rect x="416" y="106" width="1" height="1"/><rect x="417" y="106" width="1" height="1"/><rect x="418" y="106" width="1" height="1"/><rect x="419" y="105" width="1" height="1"/><rect x="420" y="105" width="1" height="1"/><rect x="421" y="105" width="1" height="1"/><rect x="422" y="105" width="1" height="1"/><rect x="423" y="106" width="1" height="1"/><rect x="424" y="106" width="1" height="1"/><rect x="425" y="106" width="1" height="1"/><rect x="426" y="106" width="1" height="1"/><rect x="427" y="106" width="1" height="1"/><rect x="428" y="106" width="1" height="1"/><rect x="429" y="106" width="1" height="1"/><rect x="430" y="106" width="1" height="1"/><rect x="431" y="105" width="1" height="1"/><rect x="432" y="105" width="1" height="1"/><rect x="433" y="105" width="1" height="1"/><rect x="434" y="106" width="1" height="1"/><rect x="435" y="106" width="1" height="1"/><rect x="436" y="106" width="1" height="1"/><rect x="437" y="106" width="1" height="1"/><rect x="438" y="106" width="1" height="1"/><rect x="439" y="106" width="1" height="1"/><rect x="440" y="106" width="1" height="1"/><rect x="441" y="106" width="1" height="1"/><rect x="442" y="106" width="1" height="1"/><rect x="443" y="105" width="1" height="1"/><rect x="444" y="105" width="1" height="1"/><rect x="445" y="106" width="1" height="1"/><rect x="446" y="105" width="1" height="1"/><rect x="447" y="105" width="1" height="1"/><rect x="448" y="106" width="1" height="1"/><rect x="449" y="106" width="1" height="1"/><rect x="450" y="106" width="1" height="1"/><rect x="451" y="106" width="1" height="1"/><rect x="452" y="106" width="1" height="1"/><rect x="453" y="106" width="1" height="1"/><rect x="454" y="106" width="1" height="1"/><rect x="455" y="106" width="1" height="1"/><rect x="456" y="106" width="1" height="1"/><rect x="457" y="106" width="1" height="1"/><rect x="458" y="106" width="1" height="1"/><rect x="459" y="106" width="1" height="1"/><rect x="460" y="106" width="1" height="1"/><rect x="461" y="106" width="1" height="1"/><rect x="462" y="106" width="1" height="1"/><rect x="463" y="105" width="1" height="1"/><rect x="464" y="105" width="1" height="1"/><rect x="465" y="105" width="1" height="1"/><rect x="466" y="106" width="1" height="1"/><rect x="467" y="106" width="1" height="1"/><rect x="468" y="106" width="1" height="1"/><rect x="469" y="106" width="1" height="1"/><rect x="470" y="105" width="1" height="1"/><rect x="471" y="105" width="1" height="1"/><rect x="472" y="106" width="1" height="1"/><rect x="473" y="106" width="1" height="1"/><rect x="474" y="106" width="1" height="1"/><rect x="475" y="106" width="1" height="1"/><rect x="476" y="106" width="1" height="1"/><rect x="477" y="106" width="1" height="1"/><rect x="478" y="106" width="1" height="1"/><rect x="479" y="106" width="1" height="1"/><rect x="480" y="106" width="1" height="1"/><rect x="481" y="106" width="1" height="1"/><rect x="482" y="106" width="1" height="1"/><rect x="483" y="106" width="1" height="1"/><rect x="484" y="106" width="1" height="1"/><rect x="485" y="106" width="1" height="1"/><rect x="486" y="106" width="1" height="1"/><rect x="487" y="106" width="1" height="1"/><rect x="488" y="106" width="1" height="1"/><rect x="489" y="106" width="1" height="1"/><rect x="490" y="106" width="1" height="1"/><rect x="491" y="106" width="1" height="1"/><rect x="492" y="106" width="1" height="1"/><rect x="493" y="105" width="1" height="1"/><rect x="494" y="105" width="1" height="1"/><rect x="495" y="106" width="1" height="1"/><rect x="496" y="106" width="1" height="1"/><rect x="497" y="106" width="1" height="1"/><rect x="498" y="106" width="1" height="1"/><rect x="499" y="106" width="1" height="1"/><rect x="500" y="106" width="1" height="1"/><rect x="501" y="106" width="1" height="1"/><rect x="502" y="106" width="1" height="1"/><rect x="503" y="105" width="1" height="1"/><rect x="504" y="105" width="1" height="1"/><rect x="505" y="105" width="1" height="1"/><rect x="506" y="105" width="1" height="1"/><rect x="507" y="105" width="1" height="1"/><rect x="508" y="106" width="1" height="1"/><rect x="509" y="106" width="1" height="1"/><rect x="510" y="106" width="1" height="1"/><rect x="511" y="106" width="1" height="1"/><rect x="512" y="106" width="1" height="1"/></g>
<g fill="#fff" shape-rendering="crispEdges"><rect x="101" y="137" width="1" height="16"/><rect x="102" y="145" width="1" height="23"/><rect x="103" y="136" width="1" height="9"/><rect x="272" y="107" width="1" height="13"/><rect x="273" y="120" width="1" height="28"/><rect x="275" y="105" width="1" height="43"/><rect x="274" y="148" width="1" height="16"/><rect x="408" y="106" width="1" height="14"/><rect x="409" y="120" width="1" height="13"/><rect x="411" y="106" width="1" height="14"/><rect x="410" y="120" width="1" height="41"/></g>
<rect x="516" y="68" width="1.4" height="81" fill="#c4c4c4"/>
<g shape-rendering="crispEdges" fill="#222">
<rect x="59" y="200" width="475" height="1" fill="#333"/>
<rect x="59" y="68" width="2" height="1"/>
<rect x="59" y="95" width="2" height="1"/>
<rect x="59" y="121" width="2" height="1"/>
<rect x="59" y="147" width="2" height="1"/>
<rect x="59" y="173" width="2" height="1"/>
<rect x="529" y="76" width="4" height="1" fill="#333"/>
<rect x="529" y="91" width="4" height="1" fill="#333"/>
<rect x="529" y="106" width="4" height="1" fill="#333"/>
<rect x="529" y="122" width="4" height="1" fill="#333"/>
<rect x="529" y="137" width="4" height="1" fill="#333"/>
<rect x="529" y="153" width="4" height="1" fill="#333"/>
<rect x="529" y="168" width="4" height="1" fill="#333"/>
<rect x="529" y="184" width="4" height="1" fill="#333"/>
<rect x="529" y="83" width="2" height="1" fill="#00007c"/>
<rect x="529" y="99" width="2" height="1" fill="#00007c"/>
<rect x="529" y="114" width="2" height="1" fill="#00007c"/>
<rect x="529" y="130" width="2" height="1" fill="#00007c"/>
<rect x="529" y="145" width="2" height="1" fill="#00007c"/>
<rect x="529" y="160" width="2" height="1" fill="#00007c"/>
<rect x="529" y="176" width="2" height="1" fill="#00007c"/>
<rect x="529" y="191" width="2" height="1" fill="#00007c"/>
</g>
<g shape-rendering="crispEdges">
<rect x="61" y="217" width="470" height="134" fill="#000"/>
<rect x="72" y="219" width="1" height="132" fill="#00007c"/>
<rect x="82" y="219" width="1" height="132" fill="#00007c"/>
<rect x="93" y="219" width="1" height="132" fill="#00007c"/>
<rect x="103" y="219" width="1" height="132" fill="#00007c"/>
<rect x="113" y="219" width="1" height="132" fill="#3c3c3c"/>
<rect x="124" y="219" width="1" height="132" fill="#00007c"/>
<rect x="134" y="219" width="1" height="132" fill="#00007c"/>
<rect x="145" y="219" width="1" height="132" fill="#00007c"/>
<rect x="155" y="219" width="1" height="132" fill="#00007c"/>
<rect x="165" y="219" width="1" height="132" fill="#3c3c3c"/>
<rect x="176" y="219" width="1" height="132" fill="#00007c"/>
<rect x="186" y="219" width="1" height="132" fill="#00007c"/>
<rect x="196" y="219" width="1" height="132" fill="#00007c"/>
<rect x="207" y="219" width="1" height="132" fill="#00007c"/>
<rect x="217" y="219" width="1" height="132" fill="#3c3c3c"/>
<rect x="228" y="219" width="1" height="132" fill="#00007c"/>
<rect x="238" y="219" width="1" height="132" fill="#00007c"/>
<rect x="248" y="219" width="1" height="132" fill="#00007c"/>
<rect x="259" y="219" width="1" height="132" fill="#00007c"/>
<rect x="269" y="219" width="1" height="132" fill="#3c3c3c"/>
<rect x="280" y="219" width="1" height="132" fill="#00007c"/>
<rect x="290" y="219" width="1" height="132" fill="#00007c"/>
<rect x="300" y="219" width="1" height="132" fill="#00007c"/>
<rect x="311" y="219" width="1" height="132" fill="#00007c"/>
<rect x="321" y="219" width="1" height="132" fill="#3c3c3c"/>
<rect x="332" y="219" width="1" height="132" fill="#00007c"/>
<rect x="342" y="219" width="1" height="132" fill="#00007c"/>
<rect x="352" y="219" width="1" height="132" fill="#00007c"/>
<rect x="363" y="219" width="1" height="132" fill="#00007c"/>
<rect x="373" y="219" width="1" height="132" fill="#3c3c3c"/>
<rect x="383" y="219" width="1" height="132" fill="#00007c"/>
<rect x="394" y="219" width="1" height="132" fill="#00007c"/>
<rect x="404" y="219" width="1" height="132" fill="#00007c"/>
<rect x="415" y="219" width="1" height="132" fill="#00007c"/>
<rect x="425" y="219" width="1" height="132" fill="#3c3c3c"/>
<rect x="435" y="219" width="1" height="132" fill="#00007c"/>
<rect x="446" y="219" width="1" height="132" fill="#00007c"/>
<rect x="456" y="219" width="1" height="132" fill="#00007c"/>
<rect x="467" y="219" width="1" height="132" fill="#00007c"/>
<rect x="477" y="219" width="1" height="132" fill="#3c3c3c"/>
<rect x="487" y="219" width="1" height="132" fill="#00007c"/>
<rect x="498" y="219" width="1" height="132" fill="#00007c"/>
<rect x="508" y="219" width="1" height="132" fill="#00007c"/>
<rect x="518" y="219" width="1" height="132" fill="#00007c"/>
<rect x="61" y="232" width="470" height="1" fill="#00007c"/>
<rect x="61" y="258" width="470" height="1" fill="#00007c"/>
<rect x="61" y="284" width="470" height="1" fill="#00007c"/>
<rect x="61" y="310" width="470" height="1" fill="#00007c"/>
<rect x="61" y="336" width="470" height="1" fill="#00007c"/>
<rect x="61" y="218" width="470" height="1" fill="#3c3c3c"/>
<rect x="61" y="245" width="470" height="1" fill="#3c3c3c"/>
<rect x="61" y="271" width="470" height="1" fill="#3c3c3c"/>
<rect x="61" y="297" width="470" height="1" fill="#3c3c3c"/>
<rect x="61" y="323" width="470" height="1" fill="#3c3c3c"/>
<rect x="62" y="333" width="1" height="17" fill="#44f517"/>
<rect x="63" y="323" width="1" height="27" fill="#8ffc1f"/>
<rect x="64" y="323" width="1" height="27" fill="#94fc20"/>
<rect x="65" y="323" width="1" height="27" fill="#8dfb1f"/>
<rect x="66" y="334" width="1" height="16" fill="#41f416"/>
<rect x="67" y="322" width="1" height="28" fill="#96fc20"/>
<rect x="68" y="345" width="1" height="5" fill="#15e70d"/>
<rect x="69" y="342" width="1" height="8" fill="#1deb10"/>
<rect x="70" y="337" width="1" height="13" fill="#30f114"/>
<rect x="71" y="332" width="1" height="18" fill="#4df618"/>
<rect x="72" y="340" width="1" height="10" fill="#21ed11"/>
<rect x="73" y="331" width="1" height="19" fill="#51f718"/>
<rect x="74" y="334" width="1" height="16" fill="#43f416"/>
<rect x="75" y="331" width="1" height="19" fill="#51f718"/>
<rect x="76" y="338" width="1" height="12" fill="#2aef13"/>
<rect x="77" y="333" width="1" height="17" fill="#46f517"/>
<rect x="78" y="331" width="1" height="19" fill="#4ef718"/>
<rect x="79" y="337" width="1" height="13" fill="#2ff014"/>
<rect x="80" y="343" width="1" height="7" fill="#1bea0f"/>
<rect x="81" y="321" width="1" height="29" fill="#9ffc20"/>
<rect x="82" y="341" width="1" height="9" fill="#20ec11"/>
<rect x="83" y="343" width="1" height="7" fill="#1ae90f"/>
<rect x="84" y="342" width="1" height="8" fill="#1cea10"/>
<rect x="85" y="343" width="1" height="7" fill="#1ae90f"/>
<rect x="86" y="344" width="1" height="6" fill="#19e90f"/>
<rect x="87" y="344" width="1" height="6" fill="#18e80e"/>
<rect x="88" y="343" width="1" height="7" fill="#1ae90f"/>
<rect x="89" y="344" width="1" height="6" fill="#18e80e"/>
<rect x="90" y="341" width="1" height="9" fill="#1eec11"/>
<rect x="91" y="348" width="1" height="2" fill="#0fe40c"/>
<rect x="92" y="348" width="1" height="2" fill="#0fe40c"/>
<rect x="93" y="348" width="1" height="2" fill="#0fe40c"/>
<rect x="94" y="348" width="1" height="2" fill="#0fe40c"/>
<rect x="95" y="348" width="1" height="2" fill="#0fe40c"/>
<rect x="96" y="342" width="1" height="8" fill="#1cea10"/>
<rect x="97" y="344" width="1" height="6" fill="#18e80f"/>
<rect x="98" y="346" width="1" height="4" fill="#13e60d"/>
<rect x="99" y="343" width="1" height="7" fill="#1ae90f"/>
<rect x="100" y="344" width="1" height="6" fill="#19e90f"/>
<rect x="101" y="348" width="1" height="2" fill="#0fe40c"/>
<rect x="102" y="342" width="1" height="8" fill="#1ceb10"/>
<rect x="103" y="348" width="1" height="2" fill="#0fe40c"/>
<rect x="104" y="348" width="1" height="2" fill="#0fe40c"/>
<rect x="105" y="346" width="1" height="4" fill="#13e60d"/>
<rect x="106" y="348" width="1" height="2" fill="#0fe40c"/>
<rect x="107" y="344" width="1" height="6" fill="#18e80f"/>
<rect x="108" y="343" width="1" height="7" fill="#1aea0f"/>
<rect x="109" y="346" width="1" height="4" fill="#13e60d"/>
<rect x="110" y="348" width="1" height="2" fill="#0fe40c"/>
<rect x="111" y="348" width="1" height="2" fill="#0fe40c"/>
<rect x="112" y="345" width="1" height="5" fill="#16e70e"/>
<rect x="113" y="348" width="1" height="2" fill="#0fe40c"/>
<rect x="114" y="348" width="1" height="2" fill="#0fe40c"/>
<rect x="115" y="341" width="1" height="9" fill="#20ec11"/>
<rect x="116" y="348" width="1" height="2" fill="#0fe40c"/>
<rect x="117" y="343" width="1" height="7" fill="#1ae90f"/>
<rect x="118" y="347" width="1" height="3" fill="#12e50c"/>
<rect x="119" y="338" width="1" height="12" fill="#29ef13"/>
<rect x="120" y="324" width="1" height="26" fill="#8bfb1f"/>
<rect x="121" y="305" width="1" height="45" fill="#fbe90d"/>
<rect x="122" y="337" width="1" height="13" fill="#2ef014"/>
<rect x="123" y="331" width="1" height="19" fill="#51f718"/>
<rect x="124" y="329" width="1" height="21" fill="#5ef91a"/>
<rect x="125" y="333" width="1" height="17" fill="#47f517"/>
<rect x="126" y="335" width="1" height="15" fill="#3cf316"/>
<rect x="127" y="335" width="1" height="15" fill="#3cf315"/>
<rect x="128" y="335" width="1" height="15" fill="#39f215"/>
<rect x="129" y="337" width="1" height="13" fill="#2ef014"/>
<rect x="130" y="331" width="1" height="19" fill="#51f718"/>
<rect x="131" y="333" width="1" height="17" fill="#48f517"/>
<rect x="132" y="329" width="1" height="21" fill="#60f91a"/>
<rect x="133" y="330" width="1" height="20" fill="#57f819"/>
<rect x="134" y="326" width="1" height="24" fill="#7afa1d"/>
<rect x="135" y="330" width="1" height="20" fill="#55f819"/>
<rect x="136" y="330" width="1" height="20" fill="#56f819"/>
<rect x="137" y="334" width="1" height="16" fill="#41f416"/>
<rect x="138" y="330" width="1" height="20" fill="#56f819"/>
<rect x="139" y="328" width="1" height="22" fill="#65f91b"/>
<rect x="140" y="334" width="1" height="16" fill="#41f416"/>
<rect x="141" y="331" width="1" height="19" fill="#53f819"/>
<rect x="142" y="328" width="1" height="22" fill="#6af91b"/>
<rect x="143" y="336" width="1" height="14" fill="#37f215"/>
<rect x="144" y="329" width="1" height="21" fill="#5ff91a"/>
<rect x="145" y="298" width="1" height="52" fill="#ffcd00"/>
<rect x="146" y="318" width="1" height="32" fill="#b2fb22"/>
<rect x="147" y="319" width="1" height="31" fill="#aefb21"/>
<rect x="148" y="302" width="1" height="48" fill="#fce009"/>
<rect x="149" y="321" width="1" height="29" fill="#a1fc21"/>
<rect x="150" y="313" width="1" height="37" fill="#d2f921"/>
<rect x="151" y="305" width="1" height="45" fill="#fbe90d"/>
<rect x="152" y="328" width="1" height="22" fill="#65f91b"/>
<rect x="153" y="329" width="1" height="21" fill="#5bf81a"/>
<rect x="154" y="330" width="1" height="20" fill="#54f819"/>
<rect x="155" y="304" width="1" height="46" fill="#fbe50b"/>
<rect x="156" y="325" width="1" height="25" fill="#83fb1e"/>
<rect x="157" y="327" width="1" height="23" fill="#6ffa1c"/>
<rect x="158" y="326" width="1" height="24" fill="#78fa1d"/>
<rect x="159" y="326" width="1" height="24" fill="#74fa1c"/>
<rect x="160" y="325" width="1" height="25" fill="#82fb1e"/>
<rect x="161" y="320" width="1" height="30" fill="#a5fb21"/>
<rect x="162" y="302" width="1" height="48" fill="#fcde08"/>
<rect x="163" y="319" width="1" height="31" fill="#adfb21"/>
<rect x="164" y="321" width="1" height="29" fill="#9ffc21"/>
<rect x="165" y="334" width="1" height="16" fill="#3ff416"/>
<rect x="166" y="328" width="1" height="22" fill="#67f91b"/>
<rect x="167" y="284" width="1" height="66" fill="#ff5500"/>
<rect x="168" y="300" width="1" height="50" fill="#fed604"/>
<rect x="169" y="319" width="1" height="31" fill="#aafb21"/>
<rect x="170" y="289" width="1" height="61" fill="#ff8100"/>
<rect x="171" y="305" width="1" height="45" fill="#fbe90d"/>
<rect x="172" y="324" width="1" height="26" fill="#88fb1f"/>
<rect x="173" y="295" width="1" height="55" fill="#ffbc00"/>
<rect x="174" y="323" width="1" height="27" fill="#8dfb1f"/>
<rect x="175" y="328" width="1" height="22" fill="#69f91b"/>
<rect x="176" y="302" width="1" height="48" fill="#fddd07"/>
<rect x="177" y="305" width="1" height="45" fill="#fbea0d"/>
<rect x="178" y="292" width="1" height="58" fill="#ff9900"/>
<rect x="179" y="303" width="1" height="47" fill="#fce30a"/>
<rect x="180" y="320" width="1" height="30" fill="#a3fc21"/>
<rect x="181" y="332" width="1" height="18" fill="#4df618"/>
<rect x="182" y="328" width="1" height="22" fill="#67f91b"/>
<rect x="183" y="298" width="1" height="52" fill="#ffcd00"/>
<rect x="184" y="328" width="1" height="22" fill="#64f91b"/>
<rect x="185" y="297" width="1" height="53" fill="#ffc800"/>
<rect x="186" y="319" width="1" height="31" fill="#adfb21"/>
<rect x="187" y="309" width="1" height="41" fill="#e9f317"/>
<rect x="188" y="327" width="1" height="23" fill="#71fa1c"/>
<rect x="189" y="320" width="1" height="30" fill="#a3fc21"/>
<rect x="190" y="319" width="1" height="31" fill="#aefb21"/>
<rect x="191" y="292" width="1" height="58" fill="#ff9900"/>
<rect x="192" y="304" width="1" height="46" fill="#fbe50b"/>
<rect x="193" y="331" width="1" height="19" fill="#53f819"/>
<rect x="194" y="320" width="1" height="30" fill="#a4fc21"/>
<rect x="195" y="335" width="1" height="15" fill="#3af315"/>
<rect x="196" y="330" width="1" height="20" fill="#58f819"/>
<rect x="197" y="333" width="1" height="17" fill="#48f517"/>
<rect x="198" y="309" width="1" height="41" fill="#e9f216"/>
<rect x="199" y="322" width="1" height="28" fill="#9bfc20"/>
<rect x="200" y="335" width="1" height="15" fill="#3bf315"/>
<rect x="201" y="315" width="1" height="35" fill="#c5fa23"/>
<rect x="202" y="309" width="1" height="41" fill="#eaf216"/>
<rect x="203" y="332" width="1" height="18" fill="#4af617"/>
<rect x="204" y="320" width="1" height="30" fill="#a8fb21"/>
<rect x="205" y="300" width="1" height="50" fill="#fed604"/>
<rect x="206" y="322" width="1" height="28" fill="#98fc20"/>
<rect x="207" y="335" width="1" height="15" fill="#3cf316"/>
<rect x="208" y="328" width="1" height="22" fill="#68f91b"/>
<rect x="209" y="301" width="1" height="49" fill="#fddb06"/>
<rect x="210" y="320" width="1" height="30" fill="#a6fb21"/>
<rect x="211" y="321" width="1" height="29" fill="#9efc20"/>
<rect x="212" y="313" width="1" height="37" fill="#d5f820"/>
<rect x="213" y="335" width="1" height="15" fill="#3af315"/>
<rect x="214" y="316" width="1" height="34" fill="#c3fa22"/>
<rect x="215" y="329" width="1" height="21" fill="#5cf81a"/>
<rect x="216" y="324" width="1" height="26" fill="#89fb1f"/>
<rect x="217" y="329" width="1" height="21" fill="#63f91a"/>
<rect x="218" y="333" width="1" height="17" fill="#48f517"/>
<rect x="219" y="309" width="1" height="41" fill="#ebf216"/>
<rect x="220" y="327" width="1" height="23" fill="#6bf91b"/>
<rect x="221" y="337" width="1" height="13" fill="#2ef014"/>
<rect x="222" y="327" width="1" height="23" fill="#70fa1c"/>
<rect x="223" y="329" width="1" height="21" fill="#5ef91a"/>
<rect x="224" y="333" width="1" height="17" fill="#48f517"/>
<rect x="225" y="323" width="1" height="27" fill="#92fc20"/>
<rect x="226" y="315" width="1" height="35" fill="#c5fa23"/>
<rect x="227" y="337" width="1" height="13" fill="#31f114"/>
<rect x="228" y="333" width="1" height="17" fill="#46f517"/>
<rect x="229" y="316" width="1" height="34" fill="#c4fa22"/>
<rect x="230" y="338" width="1" height="12" fill="#2cf013"/>
<rect x="231" y="333" width="1" height="17" fill="#47f517"/>
<rect x="232" y="327" width="1" height="23" fill="#6bf91b"/>
<rect x="233" y="336" width="1" height="14" fill="#34f114"/>
<rect x="234" y="332" width="1" height="18" fill="#4af618"/>
<rect x="235" y="326" width="1" height="24" fill="#7bfa1d"/>
<rect x="236" y="318" width="1" height="32" fill="#b2fb22"/>
<rect x="237" y="327" width="1" height="23" fill="#71fa1c"/>
<rect x="238" y="330" width="1" height="20" fill="#57f819"/>
<rect x="239" y="331" width="1" height="19" fill="#50f718"/>
<rect x="240" y="331" width="1" height="19" fill="#4ff718"/>
<rect x="241" y="333" width="1" height="17" fill="#48f517"/>
<rect x="242" y="334" width="1" height="16" fill="#3ff416"/>
<rect x="243" y="336" width="1" height="14" fill="#38f215"/>
<rect x="244" y="337" width="1" height="13" fill="#2ff014"/>
<rect x="245" y="339" width="1" height="11" fill="#23ee12"/>
<rect x="246" y="336" width="1" height="14" fill="#38f215"/>
<rect x="247" y="321" width="1" height="29" fill="#9ffc20"/>
<rect x="248" y="324" width="1" height="26" fill="#89fb1f"/>
<rect x="249" y="327" width="1" height="23" fill="#72fa1c"/>
<rect x="250" y="330" width="1" height="20" fill="#58f819"/>
<rect x="251" y="340" width="1" height="10" fill="#22ee12"/>
<rect x="252" y="328" width="1" height="22" fill="#64f91b"/>
<rect x="253" y="332" width="1" height="18" fill="#4cf618"/>
<rect x="254" y="333" width="1" height="17" fill="#45f517"/>
<rect x="255" y="335" width="1" height="15" fill="#3bf315"/>
<rect x="256" y="327" width="1" height="23" fill="#6bf91b"/>
<rect x="257" y="322" width="1" height="28" fill="#95fc20"/>
<rect x="258" y="340" width="1" height="10" fill="#22ed12"/>
<rect x="259" y="314" width="1" height="36" fill="#cdfa23"/>
<rect x="260" y="336" width="1" height="14" fill="#33f114"/>
<rect x="261" y="335" width="1" height="15" fill="#3bf315"/>
<rect x="262" y="333" width="1" height="17" fill="#44f517"/>
<rect x="263" y="340" width="1" height="10" fill="#23ee12"/>
<rect x="264" y="328" width="1" height="22" fill="#69f91b"/>
<rect x="265" y="332" width="1" height="18" fill="#4df618"/>
<rect x="266" y="321" width="1" height="29" fill="#9cfc20"/>
<rect x="267" y="320" width="1" height="30" fill="#a8fb21"/>
<rect x="268" y="333" width="1" height="17" fill="#44f517"/>
<rect x="269" y="331" width="1" height="19" fill="#4ef718"/>
<rect x="270" y="326" width="1" height="24" fill="#7bfa1d"/>
<rect x="271" y="328" width="1" height="22" fill="#6af91b"/>
<rect x="272" y="339" width="1" height="11" fill="#27ef13"/>
<rect x="273" y="328" width="1" height="22" fill="#6bf91b"/>
<rect x="274" y="334" width="1" height="16" fill="#40f416"/>
<rect x="275" y="320" width="1" height="30" fill="#a7fb21"/>
<rect x="276" y="335" width="1" height="15" fill="#39f215"/>
<rect x="277" y="336" width="1" height="14" fill="#38f215"/>
<rect x="278" y="321" width="1" height="29" fill="#9ffc20"/>
<rect x="279" y="320" width="1" height="30" fill="#a9fb21"/>
<rect x="280" y="339" width="1" height="11" fill="#24ee12"/>
<rect x="281" y="331" width="1" height="19" fill="#50f718"/>
<rect x="282" y="334" width="1" height="16" fill="#41f416"/>
<rect x="283" y="330" width="1" height="20" fill="#58f819"/>
<rect x="284" y="322" width="1" height="28" fill="#96fc20"/>
<rect x="285" y="329" width="1" height="21" fill="#5df81a"/>
<rect x="286" y="329" width="1" height="21" fill="#60f91a"/>
<rect x="287" y="340" width="1" height="10" fill="#21ed12"/>
<rect x="288" y="316" width="1" height="34" fill="#c4fa22"/>
<rect x="289" y="339" width="1" height="11" fill="#27ef13"/>
<rect x="290" y="333" width="1" height="17" fill="#43f417"/>
<rect x="291" y="339" width="1" height="11" fill="#25ee12"/>
<rect x="292" y="329" width="1" height="21" fill="#5ff91a"/>
<rect x="293" y="338" width="1" height="12" fill="#2cf013"/>
<rect x="294" y="332" width="1" height="18" fill="#4df618"/>
<rect x="295" y="332" width="1" height="18" fill="#4cf618"/>
<rect x="296" y="336" width="1" height="14" fill="#35f215"/>
<rect x="297" y="337" width="1" height="13" fill="#2ef013"/>
<rect x="298" y="329" width="1" height="21" fill="#62f91a"/>
<rect x="299" y="340" width="1" height="10" fill="#22ee12"/>
<rect x="300" y="337" width="1" height="13" fill="#30f114"/>
<rect x="301" y="336" width="1" height="14" fill="#35f215"/>
<rect x="302" y="333" width="1" height="17" fill="#47f517"/>
<rect x="303" y="336" width="1" height="14" fill="#38f215"/>
<rect x="304" y="339" width="1" height="11" fill="#27ef13"/>
<rect x="305" y="333" width="1" height="17" fill="#46f517"/>
<rect x="306" y="321" width="1" height="29" fill="#a1fc21"/>
<rect x="307" y="331" width="1" height="19" fill="#4ff718"/>
<rect x="308" y="334" width="1" height="16" fill="#41f416"/>
<rect x="309" y="336" width="1" height="14" fill="#34f114"/>
<rect x="310" y="340" width="1" height="10" fill="#22ed12"/>
<rect x="311" y="319" width="1" height="31" fill="#acfb21"/>
<rect x="312" y="332" width="1" height="18" fill="#4af617"/>
<rect x="313" y="335" width="1" height="15" fill="#3df316"/>
<rect x="314" y="328" width="1" height="22" fill="#67f91b"/>
<rect x="315" y="338" width="1" height="12" fill="#2df013"/>
<rect x="316" y="330" width="1" height="20" fill="#58f819"/>
<rect x="317" y="321" width="1" height="29" fill="#9dfc20"/>
<rect x="318" y="329" width="1" height="21" fill="#61f91a"/>
<rect x="319" y="328" width="1" height="22" fill="#63f91b"/>
<rect x="320" y="337" width="1" height="13" fill="#2ff014"/>
<rect x="321" y="328" width="1" height="22" fill="#63f91b"/>
<rect x="322" y="335" width="1" height="15" fill="#3bf315"/>
<rect x="323" y="332" width="1" height="18" fill="#4ef718"/>
<rect x="324" y="328" width="1" height="22" fill="#66f91b"/>
<rect x="325" y="323" width="1" height="27" fill="#93fc20"/>
<rect x="326" y="329" width="1" height="21" fill="#60f91a"/>
<rect x="327" y="339" width="1" height="11" fill="#24ee12"/>
<rect x="328" y="333" width="1" height="17" fill="#48f517"/>
<rect x="329" y="337" width="1" height="13" fill="#30f114"/>
<rect x="330" y="335" width="1" height="15" fill="#3af315"/>
<rect x="331" y="335" width="1" height="15" fill="#39f215"/>
<rect x="332" y="328" width="1" height="22" fill="#68f91b"/>
<rect x="333" y="332" width="1" height="18" fill="#4bf618"/>
<rect x="334" y="331" width="1" height="19" fill="#51f718"/>
<rect x="335" y="338" width="1" height="12" fill="#2bf013"/>
<rect x="336" y="336" width="1" height="14" fill="#34f114"/>
<rect x="337" y="328" width="1" height="22" fill="#6af91b"/>
<rect x="338" y="339" width="1" height="11" fill="#27ef13"/>
<rect x="339" y="328" width="1" height="22" fill="#66f91b"/>
<rect x="340" y="320" width="1" height="30" fill="#a8fb21"/>
<rect x="341" y="335" width="1" height="15" fill="#3af315"/>
<rect x="342" y="321" width="1" height="29" fill="#9dfc20"/>
<rect x="343" y="335" width="1" height="15" fill="#3df316"/>
<rect x="344" y="317" width="1" height="33" fill="#bbfb22"/>
<rect x="345" y="329" width="1" height="21" fill="#5ef91a"/>
<rect x="346" y="331" width="1" height="19" fill="#4ff718"/>
<rect x="347" y="337" width="1" height="13" fill="#32f114"/>
<rect x="348" y="328" width="1" height="22" fill="#64f91b"/>
<rect x="349" y="335" width="1" height="15" fill="#3df316"/>
<rect x="350" y="339" width="1" height="11" fill="#25ee12"/>
<rect x="351" y="335" width="1" height="15" fill="#3ef316"/>
<rect x="352" y="334" width="1" height="16" fill="#41f416"/>
<rect x="353" y="327" width="1" height="23" fill="#73fa1c"/>
<rect x="354" y="339" width="1" height="11" fill="#26ef12"/>
<rect x="355" y="335" width="1" height="15" fill="#3af315"/>
<rect x="356" y="330" width="1" height="20" fill="#55f819"/>
<rect x="357" y="321" width="1" height="29" fill="#9efc20"/>
<rect x="358" y="330" width="1" height="20" fill="#5af81a"/>
<rect x="359" y="331" width="1" height="19" fill="#50f718"/>
<rect x="360" y="340" width="1" height="10" fill="#23ee12"/>
<rect x="361" y="335" width="1" height="15" fill="#39f215"/>
<rect x="362" y="330" width="1" height="20" fill="#54f819"/>
<rect x="363" y="334" width="1" height="16" fill="#43f416"/>
<rect x="364" y="332" width="1" height="18" fill="#4df618"/>
<rect x="365" y="328" width="1" height="22" fill="#6af91b"/>
<rect x="366" y="332" width="1" height="18" fill="#4df618"/>
<rect x="367" y="333" width="1" height="17" fill="#44f517"/>
<rect x="368" y="329" width="1" height="21" fill="#5bf81a"/>
<rect x="369" y="323" width="1" height="27" fill="#8ffc1f"/>
<rect x="370" y="337" width="1" height="13" fill="#32f114"/>
<rect x="371" y="321" width="1" height="29" fill="#a1fc21"/>
<rect x="372" y="320" width="1" height="30" fill="#a7fb21"/>
<rect x="373" y="322" width="1" height="28" fill="#9afc20"/>
<rect x="374" y="327" width="1" height="23" fill="#72fa1c"/>
<rect x="375" y="314" width="1" height="36" fill="#d0f922"/>
<rect x="376" y="320" width="1" height="30" fill="#a5fb21"/>
<rect x="377" y="317" width="1" height="33" fill="#bbfb22"/>
<rect x="378" y="333" width="1" height="17" fill="#46f517"/>
<rect x="379" y="314" width="1" height="36" fill="#cdfa23"/>
<rect x="380" y="331" width="1" height="19" fill="#50f718"/>
<rect x="381" y="312" width="1" height="38" fill="#d9f71e"/>
<rect x="382" y="325" width="1" height="25" fill="#81fb1e"/>
<rect x="383" y="325" width="1" height="25" fill="#7efb1d"/>
<rect x="384" y="320" width="1" height="30" fill="#a3fc21"/>
<rect x="385" y="335" width="1" height="15" fill="#3df316"/>
<rect x="386" y="322" width="1" height="28" fill="#9bfc20"/>
<rect x="387" y="323" width="1" height="27" fill="#8dfb1f"/>
<rect x="388" y="321" width="1" height="29" fill="#a0fc21"/>
<rect x="389" y="310" width="1" height="40" fill="#e4f419"/>
<rect x="390" y="320" width="1" height="30" fill="#a5fb21"/>
<rect x="391" y="332" width="1" height="18" fill="#4ef718"/>
<rect x="392" y="335" width="1" height="15" fill="#3bf315"/>
<rect x="393" y="323" width="1" height="27" fill="#92fc20"/>
<rect x="394" y="317" width="1" height="33" fill="#b9fb22"/>
<rect x="395" y="329" width="1" height="21" fill="#62f91a"/>
<rect x="396" y="323" width="1" height="27" fill="#93fc20"/>
<rect x="397" y="328" width="1" height="22" fill="#67f91b"/>
<rect x="398" y="325" width="1" height="25" fill="#7cfa1d"/>
<rect x="399" y="334" width="1" height="16" fill="#3ff416"/>
<rect x="400" y="327" width="1" height="23" fill="#6ffa1c"/>
<rect x="401" y="316" width="1" height="34" fill="#c4fa22"/>
<rect x="402" y="330" width="1" height="20" fill="#54f819"/>
<rect x="403" y="337" width="1" height="13" fill="#31f114"/>
<rect x="404" y="330" width="1" height="20" fill="#57f819"/>
<rect x="405" y="330" width="1" height="20" fill="#57f819"/>
<rect x="406" y="329" width="1" height="21" fill="#5ff91a"/>
<rect x="407" y="334" width="1" height="16" fill="#43f416"/>
<rect x="408" y="337" width="1" height="13" fill="#31f114"/>
<rect x="409" y="332" width="1" height="18" fill="#4ef718"/>
<rect x="410" y="323" width="1" height="27" fill="#92fc20"/>
<rect x="411" y="336" width="1" height="14" fill="#37f215"/>
<rect x="412" y="340" width="1" height="10" fill="#23ee12"/>
<rect x="413" y="337" width="1" height="13" fill="#2ef014"/>
<rect x="414" y="328" width="1" height="22" fill="#6af91b"/>
<rect x="415" y="340" width="1" height="10" fill="#22ee12"/>
<rect x="416" y="339" width="1" height="11" fill="#25ee12"/>
<rect x="417" y="339" width="1" height="11" fill="#28ef13"/>
<rect x="418" y="328" width="1" height="22" fill="#66f91b"/>
<rect x="419" y="335" width="1" height="15" fill="#3cf315"/>
<rect x="420" y="331" width="1" height="19" fill="#52f719"/>
<rect x="421" y="331" width="1" height="19" fill="#53f819"/>
<rect x="422" y="334" width="1" height="16" fill="#40f416"/>
<rect x="423" y="330" width="1" height="20" fill="#55f819"/>
<rect x="424" y="334" width="1" height="16" fill="#41f416"/>
<rect x="425" y="333" width="1" height="17" fill="#47f517"/>
<rect x="426" y="336" width="1" height="14" fill="#37f215"/>
<rect x="427" y="324" width="1" height="26" fill="#88fb1e"/>
<rect x="428" y="332" width="1" height="18" fill="#4bf618"/>
<rect x="429" y="336" width="1" height="14" fill="#34f114"/>
<rect x="430" y="316" width="1" height="34" fill="#c4fa22"/>
<rect x="431" y="328" width="1" height="22" fill="#64f91b"/>
<rect x="432" y="335" width="1" height="15" fill="#3af315"/>
<rect x="433" y="339" width="1" height="11" fill="#28ef13"/>
<rect x="434" y="332" width="1" height="18" fill="#4df618"/>
<rect x="435" y="333" width="1" height="17" fill="#47f517"/>
<rect x="436" y="339" width="1" height="11" fill="#25ee12"/>
<rect x="437" y="335" width="1" height="15" fill="#39f215"/>
<rect x="438" y="332" width="1" height="18" fill="#4cf618"/>
<rect x="439" y="327" width="1" height="23" fill="#6df91c"/>
<rect x="440" y="327" width="1" height="23" fill="#70fa1c"/>
<rect x="441" y="324" width="1" height="26" fill="#88fb1f"/>
<rect x="442" y="333" width="1" height="17" fill="#44f517"/>
<rect x="443" y="328" width="1" height="22" fill="#68f91b"/>
<rect x="444" y="339" width="1" height="11" fill="#23ee12"/>
<rect x="445" y="337" width="1" height="13" fill="#31f114"/>
<rect x="446" y="326" width="1" height="24" fill="#74fa1c"/>
<rect x="447" y="333" width="1" height="17" fill="#45f517"/>
<rect x="448" y="338" width="1" height="12" fill="#2df013"/>
<rect x="449" y="332" width="1" height="18" fill="#49f617"/>
<rect x="450" y="325" width="1" height="25" fill="#7dfa1d"/>
<rect x="451" y="332" width="1" height="18" fill="#4cf618"/>
<rect x="452" y="339" width="1" height="11" fill="#24ee12"/>
<rect x="453" y="326" width="1" height="24" fill="#7bfa1d"/>
<rect x="454" y="335" width="1" height="15" fill="#3ef316"/>
<rect x="455" y="340" width="1" height="10" fill="#23ee12"/>
<rect x="456" y="339" width="1" height="11" fill="#27ef13"/>
<rect x="457" y="331" width="1" height="19" fill="#4ef718"/>
<rect x="458" y="334" width="1" height="16" fill="#40f416"/>
<rect x="459" y="339" width="1" height="11" fill="#27ef13"/>
<rect x="460" y="328" width="1" height="22" fill="#64f91b"/>
<rect x="461" y="335" width="1" height="15" fill="#3bf315"/>
<rect x="462" y="328" width="1" height="22" fill="#65f91b"/>
<rect x="463" y="332" width="1" height="18" fill="#4cf618"/>
<rect x="464" y="332" width="1" height="18" fill="#4df618"/>
<rect x="465" y="334" width="1" height="16" fill="#3ff416"/>
<rect x="466" y="331" width="1" height="19" fill="#50f718"/>
<rect x="467" y="337" width="1" height="13" fill="#32f114"/>
<rect x="468" y="336" width="1" height="14" fill="#33f114"/>
<rect x="469" y="328" width="1" height="22" fill="#64f91b"/>
<rect x="470" y="337" width="1" height="13" fill="#2ff014"/>
<rect x="471" y="316" width="1" height="34" fill="#c4fa22"/>
<rect x="472" y="330" width="1" height="20" fill="#56f819"/>
<rect x="473" y="336" width="1" height="14" fill="#38f215"/>
<rect x="474" y="335" width="1" height="15" fill="#3bf315"/>
<rect x="475" y="328" width="1" height="22" fill="#67f91b"/>
<rect x="476" y="337" width="1" height="13" fill="#2ff014"/>
<rect x="477" y="337" width="1" height="13" fill="#32f114"/>
<rect x="478" y="328" width="1" height="22" fill="#65f91b"/>
<rect x="479" y="336" width="1" height="14" fill="#34f114"/>
<rect x="480" y="336" width="1" height="14" fill="#38f215"/>
<rect x="481" y="328" width="1" height="22" fill="#65f91b"/>
<rect x="482" y="336" width="1" height="14" fill="#38f215"/>
<rect x="483" y="324" width="1" height="26" fill="#8bfb1f"/>
<rect x="484" y="329" width="1" height="21" fill="#5ef91a"/>
<rect x="485" y="329" width="1" height="21" fill="#61f91a"/>
<rect x="486" y="337" width="1" height="13" fill="#31f114"/>
<rect x="487" y="337" width="1" height="13" fill="#30f114"/>
<rect x="488" y="330" width="1" height="20" fill="#57f819"/>
<rect x="489" y="329" width="1" height="21" fill="#5ff91a"/>
<rect x="490" y="337" width="1" height="13" fill="#31f114"/>
<rect x="491" y="337" width="1" height="13" fill="#2ff014"/>
<rect x="492" y="337" width="1" height="13" fill="#32f114"/>
<rect x="493" y="338" width="1" height="12" fill="#2bf013"/>
<rect x="494" y="334" width="1" height="16" fill="#3ff416"/>
<rect x="495" y="333" width="1" height="17" fill="#44f517"/>
<rect x="496" y="332" width="1" height="18" fill="#4df618"/>
<rect x="497" y="339" width="1" height="11" fill="#25ee12"/>
<rect x="498" y="337" width="1" height="13" fill="#2ef014"/>
<rect x="499" y="338" width="1" height="12" fill="#29ef13"/>
<rect x="500" y="324" width="1" height="26" fill="#84fb1e"/>
<rect x="501" y="333" width="1" height="17" fill="#48f517"/>
<rect x="502" y="319" width="1" height="31" fill="#acfb21"/>
<rect x="503" y="323" width="1" height="27" fill="#90fc1f"/>
<rect x="504" y="333" width="1" height="17" fill="#44f517"/>
<rect x="505" y="324" width="1" height="26" fill="#8bfb1f"/>
<rect x="506" y="318" width="1" height="32" fill="#b4fb22"/>
<rect x="507" y="321" width="1" height="29" fill="#9efc20"/>
<rect x="508" y="322" width="1" height="28" fill="#98fc20"/>
<rect x="509" y="329" width="1" height="21" fill="#62f91a"/>
<rect x="510" y="328" width="1" height="22" fill="#66f91b"/>
<rect x="511" y="330" width="1" height="20" fill="#58f819"/>
<rect x="512" y="324" width="1" height="26" fill="#8cfb1f"/>
<rect x="513" y="310" width="1" height="40" fill="#e4f419"/>
<rect x="514" y="321" width="1" height="29" fill="#9ffc20"/>
<rect x="515" y="319" width="1" height="31" fill="#adfb21"/>
<rect x="516" y="323" width="1" height="27" fill="#91fc1f"/>
<rect x="59" y="350" width="473" height="1" fill="#222"/>
<rect x="59" y="218" width="2" height="1" fill="#222"/>
<rect x="59" y="245" width="2" height="1" fill="#222"/>
<rect x="59" y="271" width="2" height="1" fill="#222"/>
<rect x="59" y="297" width="2" height="1" fill="#222"/>
<rect x="59" y="323" width="2" height="1" fill="#222"/>
</g>
<g fill="#ffff14" shape-rendering="crispEdges"><rect x="62" y="281" width="1" height="2"/><rect x="63" y="281" width="1" height="2"/><rect x="64" y="282" width="1" height="1"/><rect x="65" y="281" width="1" height="2"/><rect x="66" y="280" width="1" height="2"/><rect x="67" y="279" width="1" height="3"/><rect x="68" y="278" width="1" height="3"/><rect x="69" y="279" width="1" height="2"/><rect x="70" y="278" width="1" height="2"/><rect x="71" y="270" width="1" height="9"/><rect x="72" y="277" width="1" height="2"/><rect x="73" y="278" width="1" height="2"/><rect x="74" y="279" width="1" height="3"/><rect x="75" y="279" width="1" height="3"/><rect x="76" y="279" width="1" height="5"/><rect x="77" y="281" width="1" height="3"/><rect x="78" y="280" width="1" height="2"/><rect x="79" y="280" width="1" height="3"/><rect x="80" y="279" width="1" height="3"/><rect x="81" y="278" width="1" height="3"/><rect x="82" y="278" width="1" height="3"/><rect x="83" y="278" width="1" height="3"/><rect x="84" y="278" width="1" height="2"/><rect x="85" y="278" width="1" height="2"/><rect x="86" y="279" width="1" height="3"/><rect x="87" y="281" width="1" height="2"/><rect x="88" y="280" width="1" height="2"/><rect x="89" y="279" width="1" height="2"/><rect x="90" y="280" width="1" height="1"/><rect x="91" y="280" width="1" height="4"/><rect x="92" y="283" width="1" height="2"/><rect x="93" y="282" width="1" height="2"/><rect x="94" y="280" width="1" height="3"/><rect x="95" y="278" width="1" height="3"/><rect x="96" y="277" width="1" height="3"/><rect x="97" y="277" width="1" height="5"/><rect x="98" y="281" width="1" height="2"/><rect x="99" y="280" width="1" height="3"/><rect x="100" y="279" width="1" height="4"/><rect x="101" y="278" width="1" height="2"/><rect x="102" y="278" width="1" height="2"/><rect x="103" y="278" width="1" height="2"/><rect x="104" y="279" width="1" height="5"/><rect x="105" y="282" width="1" height="1"/><rect x="106" y="282" width="1" height="2"/><rect x="107" y="280" width="1" height="4"/><rect x="108" y="280" width="1" height="2"/><rect x="109" y="275" width="1" height="6"/><rect x="110" y="276" width="1" height="4"/><rect x="111" y="278" width="1" height="2"/><rect x="112" y="278" width="1" height="5"/><rect x="113" y="282" width="1" height="2"/><rect x="114" y="282" width="1" height="2"/><rect x="115" y="278" width="1" height="6"/><rect x="116" y="278" width="1" height="4"/><rect x="117" y="278" width="1" height="3"/><rect x="118" y="278" width="1" height="4"/><rect x="119" y="276" width="1" height="6"/><rect x="120" y="278" width="1" height="2"/><rect x="121" y="278" width="1" height="3"/><rect x="122" y="280" width="1" height="2"/><rect x="123" y="281" width="1" height="1"/><rect x="124" y="278" width="1" height="4"/><rect x="125" y="279" width="1" height="3"/><rect x="126" y="281" width="1" height="2"/><rect x="127" y="281" width="1" height="2"/><rect x="128" y="281" width="1" height="2"/><rect x="129" y="280" width="1" height="2"/><rect x="130" y="277" width="1" height="5"/><rect x="131" y="277" width="1" height="3"/><rect x="132" y="275" width="1" height="3"/><rect x="133" y="276" width="1" height="3"/><rect x="134" y="278" width="1" height="3"/><rect x="135" y="280" width="1" height="3"/><rect x="136" y="279" width="1" height="3"/><rect x="137" y="277" width="1" height="3"/><rect x="138" y="277" width="1" height="3"/><rect x="139" y="278" width="1" height="2"/><rect x="140" y="278" width="1" height="4"/><rect x="141" y="280" width="1" height="1"/><rect x="142" y="280" width="1" height="2"/><rect x="143" y="280" width="1" height="3"/><rect x="144" y="281" width="1" height="3"/><rect x="145" y="280" width="1" height="4"/><rect x="146" y="278" width="1" height="4"/><rect x="147" y="278" width="1" height="2"/><rect x="148" y="277" width="1" height="3"/><rect x="149" y="278" width="1" height="2"/><rect x="150" y="278" width="1" height="4"/><rect x="151" y="280" width="1" height="2"/><rect x="152" y="280" width="1" height="2"/><rect x="153" y="279" width="1" height="2"/><rect x="154" y="280" width="1" height="4"/><rect x="155" y="281" width="1" height="3"/><rect x="156" y="279" width="1" height="4"/><rect x="157" y="279" width="1" height="2"/><rect x="158" y="280" width="1" height="2"/><rect x="159" y="281" width="1" height="4"/><rect x="160" y="280" width="1" height="5"/><rect x="161" y="280" width="1" height="4"/><rect x="162" y="282" width="1" height="2"/><rect x="163" y="282" width="1" height="2"/><rect x="164" y="280" width="1" height="3"/><rect x="165" y="278" width="1" height="3"/><rect x="166" y="277" width="1" height="2"/><rect x="167" y="277" width="1" height="3"/><rect x="168" y="278" width="1" height="2"/><rect x="169" y="278" width="1" height="2"/><rect x="170" y="278" width="1" height="4"/><rect x="171" y="279" width="1" height="2"/><rect x="172" y="279" width="1" height="3"/><rect x="173" y="278" width="1" height="2"/><rect x="174" y="278" width="1" height="2"/><rect x="175" y="278" width="1" height="3"/><rect x="176" y="280" width="1" height="1"/><rect x="177" y="280" width="1" height="3"/><rect x="178" y="281" width="1" height="2"/><rect x="179" y="281" width="1" height="2"/><rect x="180" y="281" width="1" height="2"/><rect x="181" y="278" width="1" height="5"/><rect x="182" y="276" width="1" height="4"/><rect x="183" y="275" width="1" height="4"/><rect x="184" y="272" width="1" height="7"/><rect x="185" y="278" width="1" height="2"/><rect x="186" y="279" width="1" height="2"/><rect x="187" y="277" width="1" height="4"/><rect x="188" y="276" width="1" height="2"/><rect x="189" y="274" width="1" height="3"/><rect x="190" y="274" width="1" height="6"/><rect x="191" y="277" width="1" height="4"/><rect x="192" y="279" width="1" height="3"/><rect x="193" y="277" width="1" height="3"/><rect x="194" y="277" width="1" height="3"/><rect x="195" y="278" width="1" height="2"/><rect x="196" y="278" width="1" height="3"/><rect x="197" y="277" width="1" height="4"/><rect x="198" y="277" width="1" height="3"/><rect x="199" y="274" width="1" height="6"/><rect x="200" y="279" width="1" height="3"/><rect x="201" y="281" width="1" height="2"/><rect x="202" y="281" width="1" height="2"/><rect x="203" y="279" width="1" height="3"/><rect x="204" y="279" width="1" height="2"/><rect x="205" y="280" width="1" height="1"/><rect x="206" y="279" width="1" height="3"/><rect x="207" y="279" width="1" height="3"/><rect x="208" y="279" width="1" height="2"/><rect x="209" y="279" width="1" height="3"/><rect x="210" y="280" width="1" height="2"/><rect x="211" y="280" width="1" height="2"/><rect x="212" y="281" width="1" height="1"/><rect x="213" y="280" width="1" height="4"/><rect x="214" y="279" width="1" height="2"/><rect x="215" y="277" width="1" height="4"/><rect x="216" y="277" width="1" height="4"/><rect x="217" y="278" width="1" height="2"/><rect x="218" y="278" width="1" height="3"/><rect x="219" y="278" width="1" height="3"/><rect x="220" y="279" width="1" height="2"/><rect x="221" y="279" width="1" height="2"/><rect x="222" y="278" width="1" height="3"/><rect x="223" y="278" width="1" height="4"/><rect x="224" y="276" width="1" height="3"/><rect x="225" y="276" width="1" height="6"/><rect x="226" y="277" width="1" height="2"/><rect x="227" y="277" width="1" height="2"/><rect x="228" y="276" width="1" height="2"/><rect x="229" y="277" width="1" height="3"/><rect x="230" y="278" width="1" height="2"/><rect x="231" y="278" width="1" height="4"/><rect x="232" y="279" width="1" height="4"/><rect x="233" y="279" width="1" height="1"/><rect x="234" y="276" width="1" height="4"/><rect x="235" y="277" width="1" height="1"/><rect x="236" y="270" width="1" height="12"/><rect x="237" y="281" width="1" height="3"/><rect x="238" y="282" width="1" height="2"/><rect x="239" y="280" width="1" height="4"/><rect x="240" y="279" width="1" height="3"/><rect x="241" y="279" width="1" height="3"/><rect x="242" y="280" width="1" height="2"/><rect x="243" y="281" width="1" height="2"/><rect x="244" y="281" width="1" height="2"/><rect x="245" y="280" width="1" height="2"/><rect x="246" y="280" width="1" height="3"/><rect x="247" y="281" width="1" height="2"/><rect x="248" y="279" width="1" height="3"/><rect x="249" y="280" width="1" height="2"/><rect x="250" y="280" width="1" height="8"/><rect x="251" y="283" width="1" height="4"/><rect x="252" y="285" width="1" height="2"/><rect x="253" y="280" width="1" height="6"/><rect x="254" y="280" width="1" height="3"/><rect x="255" y="279" width="1" height="4"/><rect x="256" y="279" width="1" height="2"/><rect x="257" y="278" width="1" height="2"/><rect x="258" y="279" width="1" height="2"/><rect x="259" y="279" width="1" height="4"/><rect x="260" y="282" width="1" height="1"/><rect x="261" y="282" width="1" height="4"/><rect x="262" y="280" width="1" height="5"/><rect x="263" y="279" width="1" height="3"/><rect x="264" y="278" width="1" height="2"/><rect x="265" y="278" width="1" height="3"/><rect x="266" y="278" width="1" height="4"/><rect x="267" y="281" width="1" height="4"/><rect x="268" y="282" width="1" height="3"/><rect x="269" y="282" width="1" height="3"/><rect x="270" y="282" width="1" height="2"/><rect x="271" y="281" width="1" height="3"/><rect x="272" y="281" width="1" height="2"/><rect x="273" y="281" width="1" height="2"/><rect x="274" y="282" width="1" height="4"/><rect x="275" y="284" width="1" height="2"/><rect x="276" y="283" width="1" height="3"/><rect x="277" y="282" width="1" height="3"/><rect x="278" y="283" width="1" height="3"/><rect x="279" y="283" width="1" height="3"/><rect x="280" y="282" width="1" height="4"/><rect x="281" y="280" width="1" height="3"/><rect x="282" y="281" width="1" height="5"/><rect x="283" y="282" width="1" height="4"/><rect x="284" y="282" width="1" height="3"/><rect x="285" y="283" width="1" height="2"/><rect x="286" y="283" width="1" height="5"/><rect x="287" y="283" width="1" height="3"/><rect x="288" y="283" width="1" height="3"/><rect x="289" y="282" width="1" height="4"/><rect x="290" y="283" width="1" height="2"/><rect x="291" y="282" width="1" height="3"/><rect x="292" y="281" width="1" height="2"/><rect x="293" y="280" width="1" height="3"/><rect x="294" y="280" width="1" height="3"/><rect x="295" y="279" width="1" height="3"/><rect x="296" y="277" width="1" height="3"/><rect x="297" y="277" width="1" height="3"/><rect x="298" y="277" width="1" height="2"/><rect x="299" y="276" width="1" height="3"/><rect x="300" y="278" width="1" height="2"/><rect x="301" y="279" width="1" height="4"/><rect x="302" y="282" width="1" height="2"/><rect x="303" y="279" width="1" height="5"/><rect x="304" y="279" width="1" height="3"/><rect x="305" y="277" width="1" height="3"/><rect x="306" y="277" width="1" height="3"/><rect x="307" y="278" width="1" height="1"/><rect x="308" y="278" width="1" height="2"/><rect x="309" y="279" width="1" height="5"/><rect x="310" y="281" width="1" height="3"/><rect x="311" y="279" width="1" height="3"/><rect x="312" y="278" width="1" height="4"/><rect x="313" y="277" width="1" height="3"/><rect x="314" y="277" width="1" height="4"/><rect x="315" y="278" width="1" height="3"/><rect x="316" y="276" width="1" height="3"/><rect x="317" y="277" width="1" height="2"/><rect x="318" y="277" width="1" height="3"/><rect x="319" y="279" width="1" height="2"/><rect x="320" y="280" width="1" height="1"/><rect x="321" y="278" width="1" height="3"/><rect x="322" y="278" width="1" height="1"/><rect x="323" y="278" width="1" height="1"/><rect x="324" y="278" width="1" height="2"/><rect x="325" y="278" width="1" height="3"/><rect x="326" y="277" width="1" height="2"/><rect x="327" y="276" width="1" height="3"/><rect x="328" y="276" width="1" height="2"/><rect x="329" y="277" width="1" height="5"/><rect x="330" y="280" width="1" height="2"/><rect x="331" y="277" width="1" height="4"/><rect x="332" y="277" width="1" height="3"/><rect x="333" y="278" width="1" height="3"/><rect x="334" y="279" width="1" height="2"/><rect x="335" y="279" width="1" height="2"/><rect x="336" y="279" width="1" height="2"/><rect x="337" y="280" width="1" height="4"/><rect x="338" y="281" width="1" height="3"/><rect x="339" y="281" width="1" height="2"/><rect x="340" y="281" width="1" height="2"/><rect x="341" y="278" width="1" height="4"/><rect x="342" y="278" width="1" height="3"/><rect x="343" y="275" width="1" height="4"/><rect x="344" y="275" width="1" height="6"/><rect x="345" y="277" width="1" height="4"/><rect x="346" y="278" width="1" height="6"/><rect x="347" y="278" width="1" height="4"/><rect x="348" y="278" width="1" height="5"/><rect x="349" y="279" width="1" height="4"/><rect x="350" y="280" width="1" height="3"/><rect x="351" y="280" width="1" height="3"/><rect x="352" y="280" width="1" height="2"/><rect x="353" y="280" width="1" height="2"/><rect x="354" y="279" width="1" height="4"/><rect x="355" y="279" width="1" height="3"/><rect x="356" y="281" width="1" height="2"/><rect x="357" y="282" width="1" height="1"/><rect x="358" y="279" width="1" height="4"/><rect x="359" y="278" width="1" height="2"/><rect x="360" y="278" width="1" height="3"/><rect x="361" y="279" width="1" height="2"/><rect x="362" y="279" width="1" height="6"/><rect x="363" y="280" width="1" height="5"/><rect x="364" y="280" width="1" height="3"/><rect x="365" y="278" width="1" height="4"/><rect x="366" y="280" width="1" height="2"/><rect x="367" y="279" width="1" height="3"/><rect x="368" y="278" width="1" height="3"/><rect x="369" y="279" width="1" height="2"/><rect x="370" y="279" width="1" height="3"/><rect x="371" y="279" width="1" height="3"/><rect x="372" y="281" width="1" height="2"/><rect x="373" y="279" width="1" height="3"/><rect x="374" y="279" width="1" height="5"/><rect x="375" y="281" width="1" height="3"/><rect x="376" y="283" width="1" height="2"/><rect x="377" y="282" width="1" height="3"/><rect x="378" y="283" width="1" height="3"/><rect x="379" y="277" width="1" height="9"/><rect x="380" y="282" width="1" height="1"/><rect x="381" y="280" width="1" height="4"/><rect x="382" y="281" width="1" height="3"/><rect x="383" y="282" width="1" height="4"/><rect x="384" y="281" width="1" height="2"/><rect x="385" y="279" width="1" height="3"/><rect x="386" y="278" width="1" height="2"/><rect x="387" y="278" width="1" height="2"/><rect x="388" y="279" width="1" height="3"/><rect x="389" y="279" width="1" height="3"/><rect x="390" y="280" width="1" height="4"/><rect x="391" y="283" width="1" height="1"/><rect x="392" y="281" width="1" height="3"/><rect x="393" y="281" width="1" height="1"/><rect x="394" y="281" width="1" height="3"/><rect x="395" y="279" width="1" height="5"/><rect x="396" y="280" width="1" height="4"/><rect x="397" y="278" width="1" height="3"/><rect x="398" y="277" width="1" height="2"/><rect x="399" y="278" width="1" height="1"/><rect x="400" y="278" width="1" height="2"/><rect x="401" y="279" width="1" height="4"/><rect x="402" y="279" width="1" height="3"/><rect x="403" y="278" width="1" height="2"/><rect x="404" y="275" width="1" height="4"/><rect x="405" y="275" width="1" height="3"/><rect x="406" y="276" width="1" height="5"/><rect x="407" y="279" width="1" height="2"/><rect x="408" y="278" width="1" height="3"/><rect x="409" y="279" width="1" height="2"/><rect x="410" y="279" width="1" height="2"/><rect x="411" y="279" width="1" height="4"/><rect x="412" y="280" width="1" height="3"/><rect x="413" y="279" width="1" height="2"/><rect x="414" y="279" width="1" height="2"/><rect x="415" y="277" width="1" height="4"/><rect x="416" y="277" width="1" height="4"/><rect x="417" y="276" width="1" height="3"/><rect x="418" y="276" width="1" height="4"/><rect x="419" y="279" width="1" height="1"/><rect x="420" y="278" width="1" height="3"/><rect x="421" y="278" width="1" height="3"/><rect x="422" y="280" width="1" height="3"/><rect x="423" y="280" width="1" height="3"/><rect x="424" y="280" width="1" height="2"/><rect x="425" y="277" width="1" height="5"/><rect x="426" y="277" width="1" height="2"/><rect x="427" y="278" width="1" height="2"/><rect x="428" y="278" width="1" height="3"/><rect x="429" y="279" width="1" height="2"/><rect x="430" y="279" width="1" height="3"/><rect x="431" y="280" width="1" height="2"/><rect x="432" y="277" width="1" height="4"/><rect x="433" y="278" width="1" height="2"/><rect x="434" y="277" width="1" height="3"/><rect x="435" y="277" width="1" height="3"/><rect x="436" y="279" width="1" height="1"/><rect x="437" y="278" width="1" height="2"/><rect x="438" y="278" width="1" height="2"/><rect x="439" y="278" width="1" height="3"/><rect x="440" y="280" width="1" height="2"/><rect x="441" y="281" width="1" height="3"/><rect x="442" y="280" width="1" height="4"/><rect x="443" y="280" width="1" height="3"/><rect x="444" y="280" width="1" height="2"/><rect x="445" y="281" width="1" height="1"/><rect x="446" y="281" width="1" height="4"/><rect x="447" y="280" width="1" height="5"/><rect x="448" y="282" width="1" height="3"/><rect x="449" y="279" width="1" height="4"/><rect x="450" y="277" width="1" height="5"/><rect x="451" y="275" width="1" height="3"/><rect x="452" y="275" width="1" height="2"/><rect x="453" y="276" width="1" height="5"/><rect x="454" y="279" width="1" height="2"/><rect x="455" y="279" width="1" height="4"/><rect x="456" y="281" width="1" height="2"/><rect x="457" y="281" width="1" height="2"/><rect x="458" y="281" width="1" height="2"/><rect x="459" y="282" width="1" height="2"/><rect x="460" y="283" width="1" height="2"/><rect x="461" y="281" width="1" height="3"/><rect x="462" y="280" width="1" height="3"/><rect x="463" y="281" width="1" height="2"/><rect x="464" y="281" width="1" height="2"/><rect x="465" y="279" width="1" height="3"/><rect x="466" y="279" width="1" height="2"/><rect x="467" y="279" width="1" height="3"/><rect x="468" y="280" width="1" height="2"/><rect x="469" y="280" width="1" height="4"/><rect x="470" y="281" width="1" height="3"/><rect x="471" y="280" width="1" height="3"/><rect x="472" y="280" width="1" height="1"/><rect x="473" y="280" width="1" height="2"/><rect x="474" y="280" width="1" height="2"/><rect x="475" y="281" width="1" height="4"/><rect x="476" y="282" width="1" height="1"/><rect x="477" y="281" width="1" height="2"/><rect x="478" y="279" width="1" height="3"/><rect x="479" y="280" width="1" height="2"/><rect x="480" y="281" width="1" height="1"/><rect x="481" y="280" width="1" height="2"/><rect x="482" y="279" width="1" height="2"/><rect x="483" y="279" width="1" height="1"/><rect x="484" y="279" width="1" height="4"/><rect x="485" y="279" width="1" height="4"/><rect x="486" y="280" width="1" height="2"/><rect x="487" y="280" width="1" height="3"/><rect x="488" y="282" width="1" height="2"/><rect x="489" y="277" width="1" height="7"/><rect x="490" y="276" width="1" height="2"/><rect x="491" y="274" width="1" height="3"/><rect x="492" y="274" width="1" height="6"/><rect x="493" y="277" width="1" height="2"/><rect x="494" y="278" width="1" height="3"/><rect x="495" y="279" width="1" height="2"/><rect x="496" y="279" width="1" height="2"/><rect x="497" y="279" width="1" height="3"/><rect x="498" y="281" width="1" height="2"/><rect x="499" y="280" width="1" height="3"/><rect x="500" y="279" width="1" height="2"/><rect x="501" y="278" width="1" height="3"/><rect x="502" y="280" width="1" height="3"/><rect x="503" y="278" width="1" height="4"/><rect x="504" y="276" width="1" height="3"/><rect x="505" y="276" width="1" height="3"/><rect x="506" y="278" width="1" height="3"/><rect x="507" y="278" width="1" height="2"/><rect x="508" y="279" width="1" height="1"/><rect x="509" y="279" width="1" height="2"/><rect x="510" y="278" width="1" height="3"/><rect x="511" y="278" width="1" height="2"/><rect x="512" y="278" width="1" height="3"/><rect x="513" y="279" width="1" height="1"/><rect x="514" y="278" width="1" height="2"/><rect x="515" y="277" width="1" height="4"/><rect x="516" y="278" width="1" height="3"/></g>
<rect x="516" y="218" width="1.4" height="103" fill="#c4c4c4"/>
</svg>
<div id="txt" style="position:absolute;left:0;top:0;width:743px;height:444px;will-change:transform">
<span class="t" style="left:4.00px;top:6.0px;color:#fff;transform:scaleX(0.9202)">CD</span>
<span class="t" style="left:24.15px;top:6.0px;color:#fff;transform:scaleX(0.9250)">Speed</span>
<span class="t" style="left:59.55px;top:6.0px;color:#fff;transform:scaleX(0.8000)">:</span>
<span class="t" style="left:65.17px;top:6.0px;color:#fff;transform:scaleX(0.9847)">Disc</span>
<span class="t" style="left:92.52px;top:6.0px;color:#fff;transform:scaleX(0.9313)">Quality</span>
<span class="t" style="left:133.12px;top:6.0px;color:#fff;transform:scaleX(0.9772)">Test</span>
<span class="t" style="left:159.60px;top:6.0px;color:#fff;transform:scaleX(1.2500)">-</span>
<span class="t" style="left:169.96px;top:6.0px;color:#fff;transform:scaleX(0.8926)">BENQ</span>
<span class="t" style="left:216.88px;top:6.0px;color:#fff;transform:scaleX(0.9443)">DVD</span>
<span class="t" style="left:244.43px;top:6.0px;color:#fff;transform:scaleX(0.9183)">DD</span>
<span class="t" style="left:264.51px;top:6.0px;color:#fff;transform:scaleX(0.8798)">DW1640</span>
<span class="t" style="left:321.93px;top:6.0px;color:#fff;transform:scaleX(0.9390)">BSMB</span>
<span class="t" style="left:21.98px;top:33.0px;transform:scaleX(0.9688)">Disc Quality</span>
<span class="t" style="left:290.42px;top:52.0px;transform:scaleX(0.9428)">recorded</span>
<span class="t" style="left:339.73px;top:52.0px;transform:scaleX(0.9817)">with</span>
<span class="t" style="left:364.92px;top:52.0px;transform:scaleX(0.9405)">TEAC</span>
<span class="t" style="left:410.18px;top:52.0px;transform:scaleX(0.9504)">DV-W516E</span>
<span class="t" style="left:502.98px;top:52.0px;transform:scaleX(0.8865)">v1.0D</span>
<span class="t" style="left:36.58px;top:61.0px;transform:scaleX(0.9044)">100</span>
<span class="t" style="left:42.25px;top:88.0px;transform:scaleX(0.8822)">80</span>
<span class="t" style="left:42.03px;top:114.0px;transform:scaleX(0.8924)">60</span>
<span class="t" style="left:43.09px;top:140.0px;transform:scaleX(0.8640)">40</span>
<span class="t" style="left:42.08px;top:166.0px;transform:scaleX(0.8888)">20</span>
<span class="t" style="left:532.65px;top:69.0px;transform:scaleX(0.9134)">16</span>
<span class="t" style="left:532.68px;top:84.0px;transform:scaleX(0.8890)">14</span>
<span class="t" style="left:532.65px;top:100.0px;transform:scaleX(0.9118)">12</span>
<span class="t" style="left:532.66px;top:115.0px;transform:scaleX(0.9002)">10</span>
<span class="t" style="left:532.73px;top:130.0px;transform:scaleX(0.8753)">8</span>
<span class="t" style="left:532.50px;top:146.0px;transform:scaleX(0.8937)">6</span>
<span class="t" style="left:533.59px;top:161.0px;transform:scaleX(0.8006)">4</span>
<span class="t" style="left:532.56px;top:177.0px;transform:scaleX(0.8886)">2</span>
<span class="t" style="left:57.04px;top:201.0px;transform:scaleX(0.7888)">0.0</span>
<span class="t" style="left:57.04px;top:351.0px;transform:scaleX(0.7888)">0.0</span>
<span class="t" style="left:107.52px;top:201.0px;transform:scaleX(0.8215)">0.5</span>
<span class="t" style="left:107.52px;top:351.0px;transform:scaleX(0.8215)">0.5</span>
<span class="t" style="left:160.44px;top:201.0px;transform:scaleX(0.8272)">1.0</span>
<span class="t" style="left:160.44px;top:351.0px;transform:scaleX(0.8272)">1.0</span>
<span class="t" style="left:212.24px;top:201.0px;transform:scaleX(0.8105)">1.5</span>
<span class="t" style="left:212.24px;top:351.0px;transform:scaleX(0.8105)">1.5</span>
<span class="t" style="left:263.28px;top:201.0px;transform:scaleX(0.8271)">2.0</span>
<span class="t" style="left:263.28px;top:351.0px;transform:scaleX(0.8271)">2.0</span>
<span class="t" style="left:314.99px;top:201.0px;transform:scaleX(0.8368)">2.5</span>
<span class="t" style="left:314.99px;top:351.0px;transform:scaleX(0.8368)">2.5</span>
<span class="t" style="left:367.51px;top:201.0px;transform:scaleX(0.8352)">3.0</span>
<span class="t" style="left:367.51px;top:351.0px;transform:scaleX(0.8352)">3.0</span>
<span class="t" style="left:419.23px;top:201.0px;transform:scaleX(0.8274)">3.5</span>
<span class="t" style="left:419.23px;top:351.0px;transform:scaleX(0.8274)">3.5</span>
<span class="t" style="left:471.13px;top:201.0px;transform:scaleX(0.8029)">4.0</span>
<span class="t" style="left:471.13px;top:351.0px;transform:scaleX(0.8029)">4.0</span>
<span class="t" style="left:523.87px;top:201.0px;transform:scaleX(0.8106)">4.5</span>
<span class="t" style="left:523.87px;top:351.0px;transform:scaleX(0.8106)">4.5</span>
<span class="t" style="left:42.69px;top:211.0px;transform:scaleX(0.9063)">50</span>
<span class="t" style="left:43.09px;top:238.0px;transform:scaleX(0.8640)">40</span>
<span class="t" style="left:41.89px;top:264.0px;transform:scaleX(0.8986)">30</span>
<span class="t" style="left:42.08px;top:290.0px;transform:scaleX(0.8888)">20</span>
<span class="t" style="left:42.14px;top:316.0px;transform:scaleX(0.9217)">10</span>
<span class="t" style="left:532.08px;top:211.0px;transform:scaleX(0.8888)">20</span>
<span class="t" style="left:532.13px;top:237.0px;transform:scaleX(0.9309)">16</span>
<span class="t" style="left:531.80px;top:263.0px;transform:scaleX(0.9558)">12</span>
<span class="t" style="left:532.34px;top:290.0px;transform:scaleX(0.8753)">8</span>
<span class="t" style="left:533.14px;top:316.0px;transform:scaleX(0.8006)">4</span>
<span class="t" style="left:39.76px;top:362.0px;transform:scaleX(0.9462)">PI Errors</span>
<span class="t" style="left:27.60px;top:376.0px;transform:scaleX(0.9285)">Average:</span>
<span class="t" style="left:149.31px;top:376.0px;color:#0000a0;transform:scaleX(0.8917)">33.17</span>
<span class="t" style="left:26.59px;top:395.0px;transform:scaleX(0.9085)">Maximum:</span>
<span class="t" style="left:162.89px;top:395.0px;color:#0000a0;transform:scaleX(0.8700)">96</span>
<span class="t" style="left:27.50px;top:413.0px;transform:scaleX(0.9860)">Total:</span>
<span class="t" style="left:139.91px;top:413.0px;color:#0000a0;transform:scaleX(0.8995)">495803</span>
<span class="t" style="left:219.77px;top:362.0px;transform:scaleX(0.9495)">PI Failures</span>
<span class="t" style="left:209.79px;top:376.0px;transform:scaleX(0.9074)">Average:</span>
<span class="t" style="left:337.06px;top:376.0px;color:#0000a0;transform:scaleX(0.8119)">3.81</span>
<span class="t" style="left:208.76px;top:395.0px;transform:scaleX(0.9157)">Maximum:</span>
<span class="t" style="left:344.58px;top:395.0px;color:#0000a0;transform:scaleX(0.9567)">25</span>
<span class="t" style="left:209.69px;top:413.0px;transform:scaleX(0.9692)">Total:</span>
<span class="t" style="left:326.84px;top:413.0px;color:#0000a0;transform:scaleX(0.9190)">50705</span>
<span class="t" style="left:401.94px;top:362.0px;transform:scaleX(0.9969)">Jitter</span>
<span class="t" style="left:389.79px;top:376.0px;transform:scaleX(0.9074)">Average:</span>
<span class="t" style="left:500.92px;top:376.0px;color:#0000a0;transform:scaleX(0.8603)">10.38 %</span>
<span class="t" style="left:388.76px;top:395.0px;transform:scaleX(0.9157)">Maximum:</span>
<span class="t" style="left:507.15px;top:395.0px;color:#0000a0;transform:scaleX(0.8445)">12.7 %</span>
<span class="t" style="left:388.77px;top:418.0px;transform:scaleX(0.9397)">PO Failures:</span>
<span class="t" style="left:531.58px;top:418.0px;color:#0000a0;transform:scaleX(0.9925)">0</span>
<span class="t" style="left:582.12px;top:56.0px;transform:scaleX(1.0038)"><u>S</u>tart</span>
<span class="t" style="left:677.51px;top:56.0px;transform:scaleX(0.9584)">E<u>x</u>it</span>
<span class="t" style="left:569.35px;top:77.0px;transform:scaleX(0.9789)">Disc Info</span>
<span class="t" style="left:569.96px;top:89.0px;transform:scaleX(0.8823)">Type:</span>
<span class="t" style="left:615.95px;top:89.0px;color:#0000a0;transform:scaleX(1.0284)">DVD-R</span>
<span class="t" style="left:569.13px;top:104.0px;transform:scaleX(0.8330)">ID:</span>
<span class="t" style="left:616.77px;top:104.0px;color:#0000a0;transform:scaleX(0.9356)">CMC MAG. AM3</span>
<span class="t" style="left:569.27px;top:119.0px;transform:scaleX(0.9008)">Date:</span>
<span class="t" style="left:616.30px;top:119.0px;color:#0000a0;transform:scaleX(0.9348)">12 November 2005</span>
<span class="t" style="left:569.27px;top:134.0px;transform:scaleX(0.9027)">Label:</span>
<span class="t" style="left:616.90px;top:134.0px;color:#0000a0;transform:scaleX(0.8647)">CDS_TEST_B2</span>
<span class="t" style="left:568.36px;top:150.0px;transform:scaleX(0.9891)">Settings</span>
<span class="t" style="left:569.30px;top:167.0px;transform:scaleX(0.8829)">Speed</span>
<span class="t" style="left:633.74px;top:168.0px;transform:scaleX(0.8601)">4</span>
<span class="t" style="left:644.89px;top:168.0px;transform:scaleX(1.0416)">X</span>
<span class="t" style="left:568.92px;top:193.0px;transform:scaleX(0.9698)">Start</span>
<span class="t" style="left:633.30px;top:191.0px;transform:scaleX(0.8845)">0000</span>
<span class="t" style="left:662.25px;top:191.0px;transform:scaleX(0.9342)">MB</span>
<span class="t" style="left:568.94px;top:215.0px;transform:scaleX(0.8541)">End</span>
<span class="t" style="left:633.91px;top:214.0px;transform:scaleX(0.8819)">4488</span>
<span class="t" style="left:662.25px;top:214.0px;transform:scaleX(0.9342)">MB</span>
<span class="t" style="left:586.89px;top:236.0px;transform:scaleX(0.9490)">Quick Scan</span>
<span class="t" style="left:585.98px;top:255.0px;transform:scaleX(0.9539)">Show C1/PIE</span>
<span class="t" style="left:585.99px;top:270.0px;transform:scaleX(0.9578)">Show C2/PIF</span>
<span class="t" style="left:585.98px;top:285.0px;transform:scaleX(0.9950)">Show Jitter</span>
<span class="t" style="left:585.99px;top:300.0px;transform:scaleX(0.9278)">Show Read Speed</span>
<span class="t" style="left:585.99px;top:316.0px;transform:scaleX(0.9387)">Show Write Speed</span>
<span class="t" style="left:568.90px;top:344.0px;transform:scaleX(0.9432)">Quality Score:</span>
<span class="t" style="left:694.50px;top:344.0px;color:#0000a0;transform:scaleX(0.9406)">65</span>
<span class="t" style="left:567.97px;top:376.0px;transform:scaleX(0.9375)">Progress:</span>
<span class="t" style="left:678.26px;top:376.0px;color:#0000a0;transform:scaleX(0.8778)">100 %</span>
<span class="t" style="left:567.96px;top:395.0px;transform:scaleX(0.9664)">Position:</span>
<span class="t" style="left:661.87px;top:395.0px;color:#0000a0;transform:scaleX(0.9389)">4487 MB</span>
<span class="t" style="left:568.28px;top:413.0px;transform:scaleX(0.8941)">Speed:</span>
<span class="t" style="left:676.68px;top:413.0px;color:#0000a0;transform:scaleX(0.9252)">4.18 X</span>
</div>
</body></html>
